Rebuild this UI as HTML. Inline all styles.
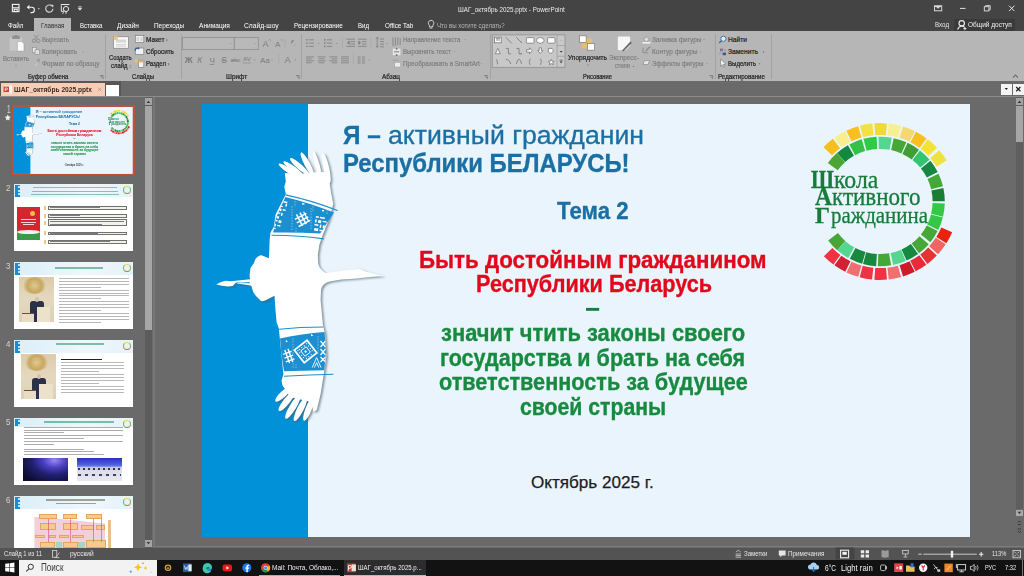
<!DOCTYPE html>
<html><head><meta charset="utf-8"><title>PowerPoint</title>
<style>
*{margin:0;padding:0;box-sizing:border-box}
html,body{width:1024px;height:576px;overflow:hidden;background:#6a6a6a;font-family:"Liberation Sans",sans-serif;position:relative}
.a{position:absolute}
.t{position:absolute;line-height:1;white-space:pre}
svg{position:absolute;overflow:visible}
</style></head><body>

<div class="a" style="left:0;top:0;width:1024px;height:31px;background:#444"></div>
<div class="a" style="left:34px;top:18px;width:37px;height:13px;background:#b6b6b6"></div>
<div class="a" style="left:954px;top:19px;width:61px;height:11.5px;background:#3a3a3a"></div>
<div class="a" style="left:0;top:31px;width:1024px;height:50px;background:#b6b6b6"></div>
<div class="a" style="left:0;top:81px;width:121px;height:15px;background:#575757"></div>
<div class="a" style="left:0;top:96px;width:1024px;height:1px;background:#8c8c8c"></div>
<div class="a" style="left:1px;top:83px;width:104px;height:13px;background:#f8cdb5"></div>
<div class="a" style="left:106px;top:85px;width:13px;height:11px;background:#fff"></div>
<div class="a" style="left:153px;top:546px;width:871px;height:1px;background:#7c7c7c"></div>
<div class="a" style="left:0;top:548px;width:1024px;height:12px;background:#535353"></div>
<div class="a" style="left:0;top:560px;width:1024px;height:16px;background:#121212"></div>
<div class="a" style="left:153px;top:97px;width:2px;height:450px;background:#777"></div>
<div class="a" style="left:105.4px;top:34px;width:1px;height:45px;background:#a2a2a2"></div>
<div class="a" style="left:180.5px;top:34px;width:1px;height:45px;background:#a2a2a2"></div>
<div class="a" style="left:301.0px;top:34px;width:1px;height:45px;background:#a2a2a2"></div>
<div class="a" style="left:489.8px;top:34px;width:1px;height:45px;background:#a2a2a2"></div>
<div class="a" style="left:714.5px;top:34px;width:1px;height:45px;background:#a2a2a2"></div>
<div class="a" style="left:770.5px;top:34px;width:1px;height:45px;background:#a2a2a2"></div>

<!-- QAT icons -->
<svg style="left:0;top:0" width="100" height="18">
 <g fill="none" stroke="#f2f2f2" stroke-width="1.1">
  <rect x="12.4" y="4.4" width="6.6" height="7.2"/>
  <line x1="12.4" y1="7.8" x2="19" y2="7.8"/>
  <rect x="14.2" y="9.3" width="3" height="2.3"/>
  <path d="M27.5 7.2 h4.2 a2.7 2.7 0 0 1 0 5.4 h-1.2"/>
 </g>
 <path d="M26.8 7.2 l2.6 -2.4 v4.8z" fill="#f2f2f2"/>
 <path d="M37.6 8.2 h2.4 l-1.2 1.3z" fill="#ddd"/>
 <path d="M51.8 6 A3.6 3.6 0 1 0 52.9 8.7" fill="none" stroke="#cfcfcf" stroke-width="1.2"/>
 <path d="M50.6 4.6 l3 0.4 -0.6 2.8z" fill="#cfcfcf"/>
 <g fill="none" stroke="#e8e8e8" stroke-width="1">
  <path d="M60.8 4.5 h8.6"/>
  <path d="M61.3 5.5 v5.8 h3"/>
  <circle cx="66" cy="9" r="2.6"/>
  <path d="M63.5 12.2 l-0.8 1.6 M66 12 v1.8"/>
 </g>
 <path d="M78.2 6.8 h3.5 M78.2 8.2 h3.5 l-1.75 2z" stroke="#e0e0e0" stroke-width="0.8" fill="#e0e0e0"/>
</svg>
<!-- window controls -->
<svg style="left:920px;top:0" width="104" height="18">
 <rect x="14.5" y="5.8" width="7.2" height="5" fill="none" stroke="#d8d8d8" stroke-width="1"/>
 <path d="M16.2 7 l1.9 1.8 1.9 -1.8z" fill="#d8d8d8"/>
 <rect x="15" y="5.8" width="6.2" height="1.2" fill="#d8d8d8"/>
 <line x1="40" y1="8.4" x2="45.5" y2="8.4" stroke="#e0e0e0" stroke-width="1"/>
 <rect x="64.3" y="6.7" width="4.6" height="4.2" fill="none" stroke="#e0e0e0" stroke-width="0.9"/>
 <path d="M65.6 6.7 v-1.1 h4.6 v4.2 h-1.2" fill="none" stroke="#e0e0e0" stroke-width="0.9"/>
 <path d="M89 5.7 l5.4 5.4 M94.4 5.7 l-5.4 5.4" stroke="#e6e6e6" stroke-width="1"/>
</svg>
<!-- bulb + person -->
<svg style="left:425px;top:18px" width="14" height="14">
 <path d="M6 2.3 a2.8 2.8 0 0 1 1.8 5 v1.6 h-3.4 v-1.6 a2.8 2.8 0 0 1 1.6 -5z" fill="none" stroke="#dcdcdc" stroke-width="0.9"/>
 <path d="M4.6 10 h2.8" stroke="#dcdcdc" stroke-width="0.9"/>
</svg>
<svg style="left:956px;top:19px" width="12" height="12">
 <circle cx="5.7" cy="4.3" r="2.7" fill="none" stroke="#f0f0f0" stroke-width="1.1"/>
 <path d="M1.6 10.6 q1 -3.2 4 -3.6 q2.2 0 3 1.2" fill="none" stroke="#f0f0f0" stroke-width="1.1"/>
 <path d="M7.3 9.6 h3.2 M8.9 8 v3.2" stroke="#f0f0f0" stroke-width="0.9"/>
</svg>
<!-- ribbon icons group 1 -->
<svg style="left:0;top:31px" width="1024" height="50">
 <!-- paste -->
 <rect x="9.7" y="6.3" width="12.4" height="13.5" fill="#c7c7c7" stroke="#bdbdbd" stroke-width="0.5"/>
 <rect x="12.2" y="4.9" width="7.6" height="3" fill="#8f8f8f"/>
 <rect x="14.6" y="4" width="2.8" height="1.4" fill="#8f8f8f"/>
 <path d="M17.4 10.4 h4.2 l2.4 2.4 v7.3 h-6.6z" fill="#fafafa" stroke="#9a9a9a" stroke-width="0.5"/>
 <path d="M15.2 34 h1.6 l-0.8 0.9z" fill="#7a7a7a"/>
 <!-- scissors -->
 <g fill="none" stroke="#8a8a8a" stroke-width="0.9">
  <circle cx="34" cy="9.8" r="1.7"/><circle cx="38.4" cy="9.8" r="1.7"/>
  <path d="M34.6 8.3 l4 -4.6 M37.8 8.3 l-4 -4.6"/>
 </g>
 <!-- copy -->
 <rect x="32.4" y="16.3" width="3.8" height="5" fill="#e6e6e6" stroke="#8a8a8a" stroke-width="0.6"/>
 <rect x="35" y="18.8" width="4.6" height="4.6" fill="#dedede" stroke="#8a8a8a" stroke-width="0.6"/>
 <path d="M82.3 20.4 h1.6 l-0.8 0.9z" fill="#7a7a7a"/>
 <!-- format painter -->
 <path d="M34.2 34.2 l2.6 -2.4 1.3 1.3 -2.6 2.4z" fill="#c4c4c4"/>
 <path d="M37 28.7 l2.4 2.1 M38.6 27.8 l1.4 1.4" stroke="#7e7e7e" stroke-width="1"/>
 <!-- dialog launchers -->
 <g fill="none" stroke="#6e6e6e" stroke-width="0.7">
  <path d="M100 44.5 h3 v3"/><path d="M100.6 45.1 l2.6 2.6"/>
  <path d="M296.2 44.5 h3 v3"/><path d="M296.8 45.1 l2.6 2.6"/>
  <path d="M484.3 44.5 h3 v3"/><path d="M484.9 45.1 l2.6 2.6"/>
  <path d="M709.6 44.5 h3 v3"/><path d="M710.2 45.1 l2.6 2.6"/>
 </g>
 <!-- new slide -->
 <rect x="113.4" y="5.7" width="15.1" height="11.6" fill="#f7f7f7" stroke="#8c8c8c" stroke-width="0.8"/>
 <rect x="116" y="8.6" width="10" height="3" fill="#d6d6d6"/>
 <path d="M116 13.6 h10 M116 15.2 h10" stroke="#c2c2c2" stroke-width="0.7"/>
 <circle cx="115.8" cy="6.9" r="2.4" fill="#e8c06a" opacity="0.85"/>
 <path d="M129.4 36.2 h1.6 l-0.8 0.9z" fill="#5a5a5a"/>
 <!-- layout -->
 <rect x="135.3" y="4.5" width="8.5" height="7" fill="#f2f2f2" stroke="#7e7e7e" stroke-width="0.7"/>
 <path d="M136.6 6 h2.6 v4.2 h-2.6z M140.3 6 h2.3 v4.2 h-2.3z" fill="#d6d6d6"/>
 <path d="M166 9.5 h1.7 l-0.85 0.95z" fill="#5a5a5a"/>
 <!-- reset -->
 <rect x="135.3" y="17" width="8.5" height="6.6" fill="#f2f2f2" stroke="#7e7e7e" stroke-width="0.7"/>
 <path d="M135 19.6 a2.6 2.6 0 0 1 3.8 -2.2" fill="none" stroke="#2c5a9e" stroke-width="1.3"/>
 <path d="M138 16 l1.8 1.4 -2 1.2z" fill="#2c5a9e"/>
 <!-- section -->
 <rect x="138.3" y="29.2" width="5.5" height="7.3" fill="#f2f2f2" stroke="#7e7e7e" stroke-width="0.7"/>
 <rect x="138.3" y="29.2" width="5.5" height="2.2" fill="#d9b070"/>
 <circle cx="136.3" cy="30" r="1.8" fill="#e8c870" opacity="0.8"/>
 <path d="M167.8 33.5 h1.7 l-0.85 0.95z" fill="#5a5a5a"/>
 <!-- font combos -->
 <rect x="182.4" y="6.4" width="51.9" height="12.2" fill="#b9b9b9" stroke="#8e8e8e" stroke-width="0.8"/>
 <rect x="234.3" y="6.4" width="24" height="12.2" fill="#b9b9b9" stroke="#8e8e8e" stroke-width="0.8"/>
 <path d="M229.7 12.4 h1.5 l-0.75 0.85z M254.3 12.4 h1.5 l-0.75 0.85z" fill="#6e6e6e"/>
</svg>
<svg style="left:0;top:0" width="1024" height="90">
<g fill="#7c7c7c"><text x="262.6" y="47" font-family="Liberation Sans" font-size="9" >A</text><text x="275" y="47" font-family="Liberation Sans" font-size="8">A</text></g>
<path d="M268.6 40.6 l1 -1.2 1 1.2 M281.2 39.4 l0.9 1.1 0.9 -1.1" stroke="#7c7c7c" stroke-width="0.6" fill="none"/>
<path d="M285 39 v9" stroke="#a8a8a8" stroke-width="0.8"/>
<path d="M290.5 42.6 l2.2 -3 1.4 1 -2.2 3z" fill="#8a8a8a"/><path d="M292.5 45.5 l3 -2.4 1.2 1.4 -2.6 2.4z" fill="#c4a0a0" opacity="0.5"/>
<g fill="#7c7c7c" font-family="Liberation Sans" font-weight="700"><text x="184.8" y="63.3" font-size="8.6">Ж</text><text x="197.2" y="63.3" font-size="8.4" font-style="italic" font-weight="400">К</text><text x="209.4" y="62.6" font-size="8" font-weight="400">Ч</text><text x="221.4" y="63" font-size="8.4" font-weight="400">S</text><text x="230.6" y="62.4" font-size="6.2" font-weight="400">abc</text><text x="243" y="60.8" font-size="6.2" font-weight="400">AV</text><text x="260" y="63" font-size="8" font-weight="400">Aa</text><text x="284.4" y="63.3" font-size="9.2" font-weight="400">A</text></g>
<path d="M209.5 64.4 h4.6 M221.2 60.4 h5" stroke="#7c7c7c" stroke-width="0.7"/>
<path d="M231 60.4 h8" stroke="#7c7c7c" stroke-width="0.6"/>
<path d="M243.4 63 h7 M243.4 63 l1 -0.8 M250.4 63 l-1 -0.8" stroke="#7c7c7c" stroke-width="0.5" fill="none"/>
<path d="M253.7 59.6 h1.6 l-0.8 0.9z" fill="#7c7c7c"/>
<path d="M271.2 59.6 h1.6 l-0.8 0.9z" fill="#7c7c7c"/>
<path d="M294.59999999999997 59.6 h1.6 l-0.8 0.9z" fill="#7c7c7c"/>
<path d="M278.7 54 v10" stroke="#a8a8a8" stroke-width="0.8"/>
<rect x="306.2" y="39.099999999999994" width="1.4" height="1.4" fill="#7c7c7c"/><path d="M308.8 39.8 h5.0" stroke="#7c7c7c" stroke-width="0.8"/><rect x="306.2" y="42.39999999999999" width="1.4" height="1.4" fill="#7c7c7c"/><path d="M308.8 43.099999999999994 h5.0" stroke="#7c7c7c" stroke-width="0.8"/><rect x="306.2" y="45.699999999999996" width="1.4" height="1.4" fill="#7c7c7c"/><path d="M308.8 46.4 h5.0" stroke="#7c7c7c" stroke-width="0.8"/>
<rect x="324.2" y="38.9" width="1.2" height="1.8" fill="#7c7c7c"/><path d="M326.8 39.8 h5.4" stroke="#7c7c7c" stroke-width="0.8"/><rect x="324.2" y="42.199999999999996" width="1.2" height="1.8" fill="#7c7c7c"/><path d="M326.8 43.099999999999994 h5.4" stroke="#7c7c7c" stroke-width="0.8"/><rect x="324.2" y="45.5" width="1.2" height="1.8" fill="#7c7c7c"/><path d="M326.8 46.4 h5.4" stroke="#7c7c7c" stroke-width="0.8"/>
<path d="M317.6 42.9 h1.8 l-0.9 1z" fill="#7c7c7c"/>
<path d="M335.70000000000005 42.9 h1.8 l-0.9 1z" fill="#7c7c7c"/>
<path d="M386.1 42.9 h1.8 l-0.9 1z" fill="#7c7c7c"/>
<path d="M368.1 59.4 h1.8 l-0.9 1z" fill="#7c7c7c"/>
<path d="M342.5 37.5 v11 M371 37.5 v11 M353.5 52.5 v12" stroke="#a8a8a8" stroke-width="0.8"/>
<path d="M346.4 39.2 h8.6 M350.4 41.6 h4.6 M350.4 44 h4.6 M346.4 46.4 h8.6" stroke="#7c7c7c" stroke-width="0.8"/>
<path d="M349.59999999999997 40.6 l-2.6 2.2 2.6 2.2z" fill="#7c7c7c"/>
<path d="M358 39.2 h8.6 M362 41.6 h4.6 M362 44 h4.6 M358 46.4 h8.6" stroke="#7c7c7c" stroke-width="0.8"/>
<path d="M358.4 40.6 l2.6 2.2 -2.6 2.2z" fill="#7c7c7c"/>
<path d="M375.8 38.8 l1.4 -1.6 1.4 1.6 M377.2 37.4 v9.8 M375.8 45.8 l1.4 1.6 1.4 -1.6 M380 39 h4 M380 41.6 h4 M380 44.2 h4 M380 46.8 h4" stroke="#7c7c7c" stroke-width="0.8" fill="none"/>
<path d="M306 56.9 h8" stroke="#7c7c7c" stroke-width="0.75"/><path d="M306 58.85 h5.6" stroke="#7c7c7c" stroke-width="0.75"/><path d="M306 60.8 h8" stroke="#7c7c7c" stroke-width="0.75"/><path d="M306 62.75 h5.6" stroke="#7c7c7c" stroke-width="0.75"/>
<path d="M317.6 56.9 h8" stroke="#7c7c7c" stroke-width="0.75"/><path d="M318.8 58.85 h5.6" stroke="#7c7c7c" stroke-width="0.75"/><path d="M317.6 60.8 h8" stroke="#7c7c7c" stroke-width="0.75"/><path d="M318.8 62.75 h5.6" stroke="#7c7c7c" stroke-width="0.75"/>
<path d="M329.4 56.9 h8" stroke="#7c7c7c" stroke-width="0.75"/><path d="M331.79999999999995 58.85 h5.6" stroke="#7c7c7c" stroke-width="0.75"/><path d="M329.4 60.8 h8" stroke="#7c7c7c" stroke-width="0.75"/><path d="M331.79999999999995 62.75 h5.6" stroke="#7c7c7c" stroke-width="0.75"/>
<path d="M341 56.9 h8" stroke="#7c7c7c" stroke-width="0.75"/><path d="M341 58.85 h8" stroke="#7c7c7c" stroke-width="0.75"/><path d="M341 60.8 h8" stroke="#7c7c7c" stroke-width="0.75"/><path d="M341 62.75 h8" stroke="#7c7c7c" stroke-width="0.75"/>
<path d="M357.6 57 h3 M357.6 59 h3 M357.6 61 h3 M357.6 63 h3 M362 57 h3 M362 59 h3 M362 61 h3 M362 63 h3" stroke="#7c7c7c" stroke-width="0.75"/>
<path d="M393 37.4 v7.6 M395.4 37.4 v7.6 M397.8 37.4 v7.6 M400.2 38 v7" stroke="#7c7c7c" stroke-width="0.8"/><path d="M392.4 45 l0.6 1 0.6 -1 M394.8 45 l0.6 1 0.6 -1" stroke="#7c7c7c" stroke-width="0.5" fill="none"/>
<rect x="392.8" y="48.6" width="7.6" height="6.6" fill="#e6e6e6"/><path d="M394 51.8 h5.2" stroke="#7c7c7c" stroke-width="1"/><circle cx="396.6" cy="48.8" r="1" fill="#7c7c7c"/><circle cx="396.6" cy="55" r="1" fill="#7c7c7c"/>
<path d="M392.6 60.2 h5 l1.4 1.4" stroke="#999" stroke-width="0.8" fill="none"/><rect x="394.6" y="62.4" width="6" height="4.6" fill="#ececec" stroke="#999" stroke-width="0.5"/>
<rect x="492.3" y="34.9" width="72.7" height="32.4" fill="#c8c8c8" stroke="#8e8e8e" stroke-width="0.8"/>
<path d="M557.1 34.9 v32.4 M557.1 45.6 h7.9 M557.1 56.2 h7.9" stroke="#9a9a9a" stroke-width="0.7"/>
<path d="M559.6 51 h3 l-1.5 1.6z M559.6 61.6 h3 l-1.5 1.6z" fill="#333"/><path d="M559.6 60.2 h3" stroke="#333" stroke-width="0.6"/>
<path d="M559.8 41.2 l1.3 -1.4 1.3 1.4" stroke="#aaa" stroke-width="0.6" fill="none"/>
<g fill="#fafafa" stroke="#6a6a6a" stroke-width="0.7"><rect x="494.6" y="37.2" width="6.6" height="5.6"/><rect x="526.4" y="37.6" width="7.6" height="5.6" rx="0.6"/><ellipse cx="540.3" cy="40.4" rx="3.8" ry="2.9"/><rect x="547.6" y="37.6" width="7.4" height="5.6" rx="1"/><path d="M495.4 53.8 l2.4 -5.4 2.4 5.4z"/><path d="M526.6 49.6 h3 v-1.8 l2.6 3 -2.6 3 v-1.8 h-3z"/><path d="M539.2 47.8 h2.2 v2.8 h1.4 l-2.5 2.8 -2.5 -2.8 h1.4z"/><path d="M548.4 48.4 h3.6 a2.6 2.6 0 1 1 -3.6 3.6z"/><path d="M551.3 59.4 l0.9 1.8 2 0.2 -1.5 1.3 0.5 2 -1.9 -1.1 -1.9 1.1 0.5 -2 -1.5 -1.3 2 -0.2z"/></g>
<g fill="none" stroke="#6a6a6a" stroke-width="0.7"><path d="M496 38.6 h4 M496 40 h4"/><path d="M505.8 37.4 l6 6"/><path d="M516.4 37.4 l5.4 5.4"/><path d="M505.8 48.4 h2.6 v5.4 h2.6"/><path d="M516.4 48.4 h2.6 v5.4 h2.8"/><path d="M496 59.4 q2 1 1 2.4 q1 1.2 0.4 2.6"/><path d="M505.8 59.4 q3.6 0 5 4.6"/><path d="M516.4 64 q1 -4.8 2.6 -4.8 q1.6 0 2.6 4.8"/><path d="M530.6 59 q-1 0 -1 1.2 v1 l-0.6 0.6 0.6 0.6 v1 q0 1.2 1 1.2"/><path d="M540 59 q1 0 1 1.2 v1 l0.6 0.6 -0.6 0.6 v1 q0 1.2 -1 1.2"/></g>
<path d="M521.8 42.8 l-1.2 0 1.2 -1.2z M522 53.8 l-1.2 -0.8 v1.6z" fill="#6a6a6a"/>
<rect x="581.6" y="38.4" width="10.4" height="10.2" fill="#ecc060" opacity="0.85"/>
<rect x="579.6" y="35.8" width="6.6" height="6.6" fill="#fdfdfd" stroke="#7a7a7a" stroke-width="0.7"/>
<rect x="587.6" y="43.6" width="7" height="6.6" fill="#fdfdfd" stroke="#7a7a7a" stroke-width="0.7"/>
<path d="M587 64.8 h1.7 l-0.85 1z M632.6 66 h1.7 l-0.85 1z" fill="#5a5a5a"/>
<path d="M617.8 37.6 q0 -1 1 -1 h10.4 q1 0 1 1 v8 l-4.6 4.6 h-6.8 q-1 0 -1 -1z" fill="#f6f6f6"/><path d="M630.6 41.2 l-8.6 9.4 l1.4 0.8 8.4 -8.4z" fill="#6c6c6c"/>
<path d="M643.6 39.4 l2.8 -2.8 2.8 2.8 -2.8 2.6z" fill="#dedede" stroke="#7c7c7c" stroke-width="0.6"/><rect x="642.4" y="42" width="8" height="1.6" fill="#f0f0f0"/>
<path d="M643 47.8 v5 h5 M648.4 47.6 l2 -0.6 -4 4 -0.8 0.4 0.4 -0.8z" stroke="#7c7c7c" stroke-width="0.7" fill="none"/>
<path d="M643 64.6 l1.6 -4 h5 l-1.6 4z" fill="#e8e8e8" stroke="#7c7c7c" stroke-width="0.6"/>
<path d="M703.2 39 h1.6 l-0.8 0.9z" fill="#7c7c7c"/>
<path d="M699.7 51.6 h1.6 l-0.8 0.9z" fill="#7c7c7c"/>
<path d="M706.2 63.4 h1.6 l-0.8 0.9z" fill="#7c7c7c"/>
<path d="M464.2 39.4 h1.6 l-0.8 0.9z" fill="#7c7c7c"/>
<path d="M453.59999999999997 51.4 h1.6 l-0.8 0.9z" fill="#7c7c7c"/>
<path d="M480.7 63.4 h1.6 l-0.8 0.9z" fill="#7c7c7c"/>
<circle cx="723.4" cy="38.8" r="2.6" fill="#dff0f8" stroke="#3d6a98" stroke-width="0.9"/><path d="M721.4 40.8 l-2.2 2.2" stroke="#3d6a98" stroke-width="1.3"/>
<path d="M720 48.6 h3 v2.6 h-3z" fill="#8c6aa8"/><path d="M722.6 52.6 h3.4 v2.6 h-3.4z" fill="#3a5a8a"/><path d="M719.4 53.8 l1.6 -1 M724 49.8 q1.6 0 1.6 1.4" stroke="#6a6a8a" stroke-width="0.6" fill="none"/>
<path d="M720.6 59 v7.4 l1.8 -1.6 1.4 2.4 1 -0.6 -1.4 -2.2 2.4 -0.2z" fill="#f8f8f8" stroke="#6a6a6a" stroke-width="0.6"/>
<path d="M762.65 51.8 h1.7 l-0.85 0.95z" fill="#4a4a4a"/>
<path d="M758.75 63.6 h1.7 l-0.85 0.95z" fill="#4a4a4a"/>
<path d="M165.95000000000002 39.4 h1.7 l-0.85 0.95z" fill="#4a4a4a"/>
<path d="M167.65 63.4 h1.7 l-0.85 0.95z" fill="#4a4a4a"/>
<path d="M129.45000000000002 65.4 h1.7 l-0.85 0.95z" fill="#4a4a4a"/>
</svg>
<div class="t" style="left:458.20px;top:6.00px;font-size:7.25px;color:#ececec;transform:scaleX(0.8657);transform-origin:left;">ШАГ_октябрь 2025.pptx - PowerPoint</div>
<div class="t" style="left:8.00px;top:22.00px;font-size:7.39px;color:#ffffff;transform:scaleX(0.8474);transform-origin:left;">Файл</div>
<div class="t" style="left:79.50px;top:22.00px;font-size:7.39px;color:#ffffff;transform:scaleX(0.8154);transform-origin:left;">Вставка</div>
<div class="t" style="left:117.00px;top:22.00px;font-size:7.39px;color:#ffffff;transform:scaleX(0.8815);transform-origin:left;">Дизайн</div>
<div class="t" style="left:153.75px;top:22.00px;font-size:7.39px;color:#ffffff;transform:scaleX(0.8725);transform-origin:left;">Переходы</div>
<div class="t" style="left:199.00px;top:22.00px;font-size:7.39px;color:#ffffff;transform:scaleX(0.8934);transform-origin:left;">Анимация</div>
<div class="t" style="left:244.00px;top:22.00px;font-size:7.39px;color:#ffffff;transform:scaleX(0.9069);transform-origin:left;">Слайд-шоу</div>
<div class="t" style="left:294.00px;top:22.00px;font-size:7.39px;color:#ffffff;transform:scaleX(0.8550);transform-origin:left;">Рецензирование</div>
<div class="t" style="left:358.40px;top:22.00px;font-size:7.39px;color:#ffffff;transform:scaleX(0.8226);transform-origin:left;">Вид</div>
<div class="t" style="left:384.75px;top:22.00px;font-size:7.39px;color:#ffffff;transform:scaleX(0.8558);transform-origin:left;">Office Tab</div>
<div class="t" style="left:40.50px;top:22.00px;font-size:7.39px;color:#303030;transform:scaleX(0.8353);transform-origin:left;">Главная</div>
<div class="t" style="left:437.00px;top:22.00px;font-size:7.39px;color:#b4b4b4;transform:scaleX(0.8292);transform-origin:left;">Что вы хотите сделать?</div>
<div class="t" style="left:935.00px;top:21.00px;font-size:7.25px;color:#e6e6e6;transform:scaleX(0.8540);transform-origin:left;">Вход</div>
<div class="t" style="left:967.70px;top:21.00px;font-size:7.25px;color:#f0f0f0;transform:scaleX(0.8976);transform-origin:left;">Общий доступ</div>
<div class="t" style="left:3.00px;top:56.00px;font-size:6.67px;color:#808080;transform:scaleX(0.9200);transform-origin:left;-webkit-text-stroke:0.22px #808080;">Вставить</div>
<div class="t" style="left:42.10px;top:37.00px;font-size:6.67px;color:#808080;transform:scaleX(0.9072);transform-origin:left;-webkit-text-stroke:0.22px #808080;">Вырезать</div>
<div class="t" style="left:42.00px;top:49.00px;font-size:6.67px;color:#808080;transform:scaleX(0.9723);transform-origin:left;-webkit-text-stroke:0.22px #808080;">Копировать</div>
<div class="t" style="left:42.00px;top:61.00px;font-size:6.67px;color:#808080;transform:scaleX(0.9619);transform-origin:left;-webkit-text-stroke:0.22px #808080;">Формат по образцу</div>
<div class="t" style="left:27.80px;top:74.00px;font-size:6.67px;color:#262626;transform:scaleX(0.8940);transform-origin:left;-webkit-text-stroke:0.22px #262626;">Буфер обмена</div>
<div class="t" style="left:109.40px;top:55.00px;font-size:6.67px;color:#262626;transform:scaleX(0.8920);transform-origin:left;-webkit-text-stroke:0.22px #262626;">Создать</div>
<div class="t" style="left:111.00px;top:63.00px;font-size:6.67px;color:#262626;transform:scaleX(0.8897);transform-origin:left;-webkit-text-stroke:0.22px #262626;">слайд</div>
<div class="t" style="left:145.60px;top:37.00px;font-size:6.67px;color:#262626;transform:scaleX(0.9805);transform-origin:left;-webkit-text-stroke:0.22px #262626;">Макет</div>
<div class="t" style="left:145.60px;top:49.00px;font-size:6.67px;color:#262626;transform:scaleX(0.9382);transform-origin:left;-webkit-text-stroke:0.22px #262626;">Сбросить</div>
<div class="t" style="left:145.60px;top:61.00px;font-size:6.67px;color:#262626;transform:scaleX(0.9076);transform-origin:left;-webkit-text-stroke:0.22px #262626;">Раздел</div>
<div class="t" style="left:132.00px;top:74.00px;font-size:6.67px;color:#262626;transform:scaleX(0.8865);transform-origin:left;-webkit-text-stroke:0.22px #262626;">Слайды</div>
<div class="t" style="left:225.80px;top:74.00px;font-size:6.67px;color:#262626;transform:scaleX(0.9665);transform-origin:left;-webkit-text-stroke:0.22px #262626;">Шрифт</div>
<div class="t" style="left:382.00px;top:74.00px;font-size:6.67px;color:#262626;transform:scaleX(0.9625);transform-origin:left;-webkit-text-stroke:0.22px #262626;">Абзац</div>
<div class="t" style="left:403.00px;top:37.00px;font-size:6.67px;color:#808080;transform:scaleX(0.9099);transform-origin:left;-webkit-text-stroke:0.22px #808080;">Направление текста</div>
<div class="t" style="left:403.00px;top:49.00px;font-size:6.67px;color:#808080;transform:scaleX(0.9243);transform-origin:left;-webkit-text-stroke:0.22px #808080;">Выровнять текст</div>
<div class="t" style="left:403.00px;top:61.00px;font-size:6.67px;color:#808080;transform:scaleX(0.9522);transform-origin:left;-webkit-text-stroke:0.22px #808080;">Преобразовать в SmartArt</div>
<div class="t" style="left:567.50px;top:55.00px;font-size:6.67px;color:#262626;transform:scaleX(0.9831);transform-origin:left;-webkit-text-stroke:0.22px #262626;">Упорядочить</div>
<div class="t" style="left:609.00px;top:55.00px;font-size:6.67px;color:#808080;transform:scaleX(0.9668);transform-origin:left;-webkit-text-stroke:0.22px #808080;">Экспресс-</div>
<div class="t" style="left:614.50px;top:63.00px;font-size:6.67px;color:#808080;transform:scaleX(0.8463);transform-origin:left;-webkit-text-stroke:0.22px #808080;">стили</div>
<div class="t" style="left:652.00px;top:37.00px;font-size:6.67px;color:#808080;transform:scaleX(0.9723);transform-origin:left;-webkit-text-stroke:0.22px #808080;">Заливка фигуры</div>
<div class="t" style="left:652.00px;top:49.00px;font-size:6.67px;color:#808080;transform:scaleX(0.9760);transform-origin:left;-webkit-text-stroke:0.22px #808080;">Контур фигуры</div>
<div class="t" style="left:652.00px;top:61.00px;font-size:6.67px;color:#808080;transform:scaleX(0.9270);transform-origin:left;-webkit-text-stroke:0.22px #808080;">Эффекты фигуры</div>
<div class="t" style="left:583.00px;top:74.00px;font-size:6.67px;color:#262626;transform:scaleX(0.8637);transform-origin:left;-webkit-text-stroke:0.22px #262626;">Рисование</div>
<div class="t" style="left:728.00px;top:37.00px;font-size:6.67px;color:#262626;-webkit-text-stroke:0.22px #262626;">Найти</div>
<div class="t" style="left:728.00px;top:49.00px;font-size:6.67px;color:#262626;-webkit-text-stroke:0.22px #262626;">Заменить</div>
<div class="t" style="left:728.00px;top:61.00px;font-size:6.67px;color:#262626;transform:scaleX(0.9104);transform-origin:left;-webkit-text-stroke:0.22px #262626;">Выделить</div>
<div class="t" style="left:718.00px;top:74.00px;font-size:6.67px;color:#262626;transform:scaleX(0.9255);transform-origin:left;-webkit-text-stroke:0.22px #262626;">Редактирование</div>
<div class="t" style="left:13.70px;top:86.00px;font-size:7.97px;color:#3c2820;font-weight:700;transform:scaleX(0.8315);transform-origin:left;">ШАГ_октябрь 2025.pptx</div>
<div class="a" style="left:202px;top:104px;width:768px;height:433px;background:#e9f4fc;overflow:hidden">
<div class="a" style="left:0;top:0;width:106px;height:433px;background:#0091d9"></div>
<svg style="left:-202px;top:-104px" width="1024" height="576">
<g transform="translate(1.7,1.2)" fill="#4a6070" opacity="0.65" filter="url(#sh)"><path d="M216.2 284.4 Q220 282 225.5 280.7 L230.8 281.2 L250 279.2 L249.5 276 L250.5 267.7 L253.7 263.5 Q255 258.5 257.6 256.8 Q259.5 255 261.5 255.3 L268.8 258.3 L269.3 250 L269.6 240 L270.5 232.5 L273.9 226.7 L275.6 214.5 L285.2 195.4 L285.8 194 L284.3 186.7 L285.8 181.5 L284.8 173 L298 174 L318 172 L328 172 L331.2 193.6 L333.2 204 L329.6 218 L322.6 235.3 L319.4 244.5 L317.8 255 L318.2 263.6 Q319 267.5 321 269 Q323 271.5 325.6 273 L345.2 270.2 L358.4 269 Q360 268.8 361.6 269.5 L366.25 271.8 L384.2 275.7 L363.1 277.65 L356.9 278.4 L341.25 279.6 L329.5 281.6 Q326 282.5 324 284.3 Q321.5 286.5 321 290.2 L320.6 300 L322.9 324.8 L325.1 333.9 L326.3 356.4 L323.5 375.7 L320.6 393.9 L316.8 410.1 L313.5 412 L311 402 L290 397 L282.4 385.3 L281.5 380.5 L283.4 374.5 L278.8 328.2 L276.6 322.6 L275.5 310 L274.5 295.8 L266.2 300 Q263.5 301.5 261 301 L255.75 295.8 L253.1 291.7 L251.6 286.5 L250.5 285.4 L236 283.2 L250 281.6 L249.8 283.6 L236 282.6 L232.8 286 L227.6 286.5 Q222 286 216.2 284.4 Z"/><ellipse cx="289.80" cy="171.15" rx="13.29" ry="2.60" transform="rotate(-146.1 289.80 171.15)"/><ellipse cx="293.65" cy="169.10" rx="12.62" ry="2.60" transform="rotate(-143.6 293.65 169.10)"/><ellipse cx="299.50" cy="166.50" rx="12.34" ry="2.70" transform="rotate(-138.6 299.50 166.50)"/><ellipse cx="307.25" cy="164.15" rx="13.28" ry="2.80" transform="rotate(-117.9 307.25 164.15)"/><ellipse cx="317.05" cy="164.65" rx="13.82" ry="2.50" transform="rotate(-105.6 317.05 164.65)"/><ellipse cx="326.40" cy="168.20" rx="15.14" ry="2.80" transform="rotate(-102.7 326.40 168.20)"/><ellipse cx="283.60" cy="393.80" rx="11.05" ry="3.10" transform="rotate(137.4 283.60 393.80)"/><ellipse cx="286.80" cy="401.05" rx="12.56" ry="3.20" transform="rotate(128.5 286.80 401.05)"/><ellipse cx="292.85" cy="406.90" rx="13.77" ry="3.30" transform="rotate(121.4 292.85 406.90)"/><ellipse cx="300.40" cy="409.05" rx="13.39" ry="3.20" transform="rotate(116.9 300.40 409.05)"/><ellipse cx="308.45" cy="409.35" rx="12.11" ry="3.10" transform="rotate(111.4 308.45 409.35)"/></g>
<defs>
 <filter id="sh" x="-20%" y="-20%" width="140%" height="140%"><feGaussianBlur stdDeviation="1.2"/></filter>
 <clipPath id="c1"><path d="M285.4 197 Q310 203 334 212.6 L327 223 L320.2 233.5 Q296 232 273.2 232.6 L276 218 Z"/></clipPath>
 <clipPath id="c2"><path d="M280 338.6 Q302 333.5 324.6 332 L326 352 L324.3 370.3 Q302 370.6 284 371.3 L281.5 355 Z"/></clipPath>
</defs>
<g id="bird" fill="#fff"><path d="M216.2 284.4 Q220 282 225.5 280.7 L230.8 281.2 L250 279.2 L249.5 276 L250.5 267.7 L253.7 263.5 Q255 258.5 257.6 256.8 Q259.5 255 261.5 255.3 L268.8 258.3 L269.3 250 L269.6 240 L270.5 232.5 L273.9 226.7 L275.6 214.5 L285.2 195.4 L285.8 194 L284.3 186.7 L285.8 181.5 L284.8 173 L298 174 L318 172 L328 172 L331.2 193.6 L333.2 204 L329.6 218 L322.6 235.3 L319.4 244.5 L317.8 255 L318.2 263.6 Q319 267.5 321 269 Q323 271.5 325.6 273 L345.2 270.2 L358.4 269 Q360 268.8 361.6 269.5 L366.25 271.8 L384.2 275.7 L363.1 277.65 L356.9 278.4 L341.25 279.6 L329.5 281.6 Q326 282.5 324 284.3 Q321.5 286.5 321 290.2 L320.6 300 L322.9 324.8 L325.1 333.9 L326.3 356.4 L323.5 375.7 L320.6 393.9 L316.8 410.1 L313.5 412 L311 402 L290 397 L282.4 385.3 L281.5 380.5 L283.4 374.5 L278.8 328.2 L276.6 322.6 L275.5 310 L274.5 295.8 L266.2 300 Q263.5 301.5 261 301 L255.75 295.8 L253.1 291.7 L251.6 286.5 L250.5 285.4 L236 283.2 L250 281.6 L249.8 283.6 L236 282.6 L232.8 286 L227.6 286.5 Q222 286 216.2 284.4 Z"/><ellipse cx="289.80" cy="171.15" rx="13.29" ry="2.60" transform="rotate(-146.1 289.80 171.15)"/><ellipse cx="293.65" cy="169.10" rx="12.62" ry="2.60" transform="rotate(-143.6 293.65 169.10)"/><ellipse cx="299.50" cy="166.50" rx="12.34" ry="2.70" transform="rotate(-138.6 299.50 166.50)"/><ellipse cx="307.25" cy="164.15" rx="13.28" ry="2.80" transform="rotate(-117.9 307.25 164.15)"/><ellipse cx="317.05" cy="164.65" rx="13.82" ry="2.50" transform="rotate(-105.6 317.05 164.65)"/><ellipse cx="326.40" cy="168.20" rx="15.14" ry="2.80" transform="rotate(-102.7 326.40 168.20)"/><ellipse cx="283.60" cy="393.80" rx="11.05" ry="3.10" transform="rotate(137.4 283.60 393.80)"/><ellipse cx="286.80" cy="401.05" rx="12.56" ry="3.20" transform="rotate(128.5 286.80 401.05)"/><ellipse cx="292.85" cy="406.90" rx="13.77" ry="3.30" transform="rotate(121.4 292.85 406.90)"/><ellipse cx="300.40" cy="409.05" rx="13.39" ry="3.20" transform="rotate(116.9 300.40 409.05)"/><ellipse cx="308.45" cy="409.35" rx="12.11" ry="3.10" transform="rotate(111.4 308.45 409.35)"/></g>
<path id="leggap" d="M236.5 282.9 L249.6 281.9 L249.6 283.3 Z" fill="#0091d9"/>
<g fill="#1b8fd0">
 <path d="M285.4 197 Q310 203 334 212.6 L327 223 L320.2 233.5 Q296 232 273.2 232.6 L276 218 Z"/>
 <path d="M285.4 194.9 Q312 200.5 337.6 210.6" fill="none" stroke="#1b8fd0" stroke-width="1.1"/>
 <path d="M271.6 235.3 Q300 235.5 323.6 238.9" fill="none" stroke="#1b8fd0" stroke-width="1.1"/>
 <path d="M280 338.6 Q302 333.5 324.6 332 L326 352 L324.3 370.3 Q302 370.6 284 371.3 L281.5 355 Z"/>
 <path d="M279 329.2 Q300 327 323.4 327" fill="none" stroke="#1b8fd0" stroke-width="1.1"/>
 <path d="M284 376.3 Q310 374.6 333.4 374.3" fill="none" stroke="#1b8fd0" stroke-width="1.1"/>
</g>
<g fill="#fff" clip-path="url(#c1)">
 <g transform="rotate(12 282 215)">
  <rect x="277" y="201" width="2.2" height="2.6"/><rect x="280.6" y="201" width="4" height="1.4"/><rect x="283.4" y="203" width="1.4" height="3"/>
  <rect x="277" y="206" width="4" height="1.4"/><rect x="278" y="209" width="2.4" height="2.4"/><rect x="281.6" y="209" width="3" height="1.4"/>
  <rect x="276" y="213" width="4" height="1.4"/><rect x="281" y="213" width="1.4" height="3"/><rect x="277" y="217" width="2.6" height="2.4"/>
  <rect x="275" y="221" width="4" height="1.4"/><rect x="280" y="220.6" width="2.8" height="2.6"/><rect x="275.6" y="225" width="2.6" height="2.6"/>
  <rect x="279.5" y="225.4" width="3.2" height="1.4"/><rect x="274.6" y="229" width="4" height="1.4"/>
 </g>
 <g transform="rotate(-28 302 220)">
  <rect x="296" y="215.4" width="13" height="1.5"/><rect x="296" y="219.4" width="13" height="1.5"/><rect x="296" y="223.4" width="13" height="1.5"/>
  <rect x="299" y="212.5" width="1.5" height="13"/><rect x="303" y="212.5" width="1.5" height="13"/><rect x="306.6" y="213.5" width="1.3" height="11"/>
 </g>
 <g transform="rotate(10 321 225)">
  <rect x="314.5" y="217" width="3" height="1.5"/><rect x="318.6" y="217" width="5" height="1.5"/><rect x="314.5" y="220.4" width="1.5" height="3"/>
  <rect x="317.6" y="220.6" width="3" height="2.6"/><rect x="322" y="220.4" width="4" height="1.5"/><rect x="314.5" y="225" width="4" height="1.5"/>
  <rect x="320" y="224.6" width="1.5" height="3.4"/><rect x="323" y="225" width="3" height="2.6"/><rect x="315" y="229" width="4" height="2.6"/><rect x="320.4" y="229.6" width="5" height="1.5"/>
 </g>
 <path d="M292 206 v24 M295 201 v6 M296 232 v-4 M311 208 v22 M313 206 v6 M327 214 v-4" stroke="#fff" stroke-width="0.5" stroke-dasharray="1.6 1.2" opacity="0.85"/>
 <rect x="302" y="203.2" width="2.4" height="1.4"/><rect x="322" y="210" width="2" height="1.4"/>
</g>
<g fill="#fff" clip-path="url(#c2)">
 <g transform="rotate(-38 305.6 351.5)">
  <rect x="297.6" y="343.5" width="16" height="16" fill="none" stroke="#fff" stroke-width="1.7"/>
  <rect x="302.2" y="348.1" width="6.8" height="6.8" fill="none" stroke="#fff" stroke-width="0.9"/>
  <rect x="304.6" y="350.5" width="2" height="2"/>
  <path d="M299.6 346 h1.2 M299.6 349 h1.2 M299.6 352 h1.2 M299.6 355 h1.2 M310.6 346 h1.2 M310.6 349 h1.2 M310.6 352 h1.2 M310.6 355 h1.2 M302 345.6 v1.2 M305 345.6 v1.2 M308 345.6 v1.2 M302 356.8 v1.2 M305 356.8 v1.2 M308 356.8 v1.2" stroke="#fff" stroke-width="1"/>
 </g>
 <g transform="rotate(-20 288.5 356)">
  <rect x="284" y="352" width="9" height="1.4"/><rect x="284" y="356" width="9" height="1.4"/><rect x="284" y="360" width="9" height="1.4"/>
  <rect x="286.4" y="349" width="1.4" height="14"/><rect x="289.8" y="349" width="1.4" height="14"/>
 </g>
 <path d="M320.5 341 l5 6 M325.5 341 l-5 6 M320.5 349 l5 6 M325.5 349 l-5 6 M320.5 357 l5 5 M325.5 357 l-5 5" stroke="#fff" stroke-width="1.2"/>
 <path d="M312.2 367.6 l4.4 -10 4.4 10 M314.4 367.6 l2.2 -5 2.2 5" stroke="#fff" stroke-width="0.9" fill="none"/>
 <path d="M286 340 l2 1.6 -2.4 0.6z M311 334 l2.4 1.4 -2.4 0.8z"/>
 <path d="M293 338 v30 M296 368 v-4 M318 336 v18" stroke="#fff" stroke-width="0.5" stroke-dasharray="1.6 1.2" opacity="0.8"/>
</g>

<path d="M827.91 162.96A64.8 64.8 0 0 1 836.89 153.12L845.01 162.23A52.6 52.6 0 0 0 837.72 170.21Z" fill="#4ca535"/>
<path d="M837.06 152.97A64.8 64.8 0 0 1 847.89 145.21L853.94 155.81A52.6 52.6 0 0 0 845.15 162.10Z" fill="#12893f"/>
<path d="M849.38 144.39A64.8 64.8 0 0 1 861.70 139.34L865.15 151.04A52.6 52.6 0 0 0 855.14 155.14Z" fill="#34c246"/>
<path d="M863.45 138.85A64.8 64.8 0 0 1 876.61 136.79L877.25 148.97A52.6 52.6 0 0 0 866.56 150.65Z" fill="#2fcb45"/>
<path d="M878.53 136.72A64.8 64.8 0 0 1 891.81 137.79L889.59 149.78A52.6 52.6 0 0 0 878.81 148.91Z" fill="#54d68e"/>
<path d="M893.69 138.16A64.8 64.8 0 0 1 906.36 142.30L901.39 153.45A52.6 52.6 0 0 0 891.12 150.09Z" fill="#45a836"/>
<path d="M907.59 142.87A64.8 64.8 0 0 1 919.00 149.75L911.66 159.49A52.6 52.6 0 0 0 902.40 153.91Z" fill="#3f9f33"/>
<path d="M919.98 150.51A64.8 64.8 0 0 1 929.57 159.76L920.23 167.62A52.6 52.6 0 0 0 912.46 160.11Z" fill="#33c46f"/>
<path d="M930.43 160.81A64.8 64.8 0 0 1 937.69 171.98L926.83 177.54A52.6 52.6 0 0 0 920.94 168.47Z" fill="#17883f"/>
<path d="M938.54 173.71A64.8 64.8 0 0 1 942.98 186.26L931.13 189.13A52.6 52.6 0 0 0 927.52 178.94Z" fill="#45a836"/>
<path d="M943.36 187.92A64.8 64.8 0 0 1 944.80 201.16L932.60 201.22A52.6 52.6 0 0 0 931.43 190.47Z" fill="#1a7d36"/>
<path d="M944.77 203.42A64.8 64.8 0 0 1 943.01 216.63L931.15 213.78A52.6 52.6 0 0 0 932.58 203.06Z" fill="#33c846"/>
<path d="M942.82 217.40A64.8 64.8 0 0 1 938.24 229.91L927.28 224.56A52.6 52.6 0 0 0 930.99 214.40Z" fill="#33c846"/>
<path d="M937.63 231.12A64.8 64.8 0 0 1 930.36 242.28L920.88 234.60A52.6 52.6 0 0 0 926.78 225.54Z" fill="#45a836"/>
<path d="M928.76 244.18A64.8 64.8 0 0 1 919.00 253.25L911.66 243.51A52.6 52.6 0 0 0 919.58 236.15Z" fill="#45a836"/>
<path d="M918.09 253.92A64.8 64.8 0 0 1 906.56 260.61L901.56 249.48A52.6 52.6 0 0 0 910.92 244.05Z" fill="#17883f"/>
<path d="M905.84 260.93A64.8 64.8 0 0 1 893.14 264.95L890.67 253.01A52.6 52.6 0 0 0 900.97 249.74Z" fill="#54d68e"/>
<path d="M891.14 265.34A64.8 64.8 0 0 1 877.85 266.26L878.26 254.07A52.6 52.6 0 0 0 889.04 253.32Z" fill="#45a836"/>
<path d="M876.16 266.19A64.8 64.8 0 0 1 863.01 264.03L866.21 252.26A52.6 52.6 0 0 0 876.88 254.01Z" fill="#17883f"/>
<path d="M862.14 263.79A64.8 64.8 0 0 1 849.78 258.82L855.47 248.03A52.6 52.6 0 0 0 865.50 252.06Z" fill="#17883f"/>
<path d="M848.29 258.01A64.8 64.8 0 0 1 837.40 250.33L845.42 241.14A52.6 52.6 0 0 0 854.26 247.37Z" fill="#54d68e"/>
<path d="M837.23 250.18A64.8 64.8 0 0 1 828.18 240.41L837.94 233.08A52.6 52.6 0 0 0 845.28 241.02Z" fill="#45a836"/>
<path d="M823.51 147.14A78.4 78.4 0 0 1 832.93 138.80L840.01 148.24A66.6 66.6 0 0 0 832.01 155.32Z" fill="#f7bf1e"/>
<path d="M834.36 137.75A78.4 78.4 0 0 1 845.14 131.28L850.39 141.85A66.6 66.6 0 0 0 841.23 147.35Z" fill="#f8ef8c"/>
<path d="M846.37 130.68A78.4 78.4 0 0 1 858.13 126.21L861.42 137.54A66.6 66.6 0 0 0 851.43 141.34Z" fill="#f8bf1e"/>
<path d="M859.97 125.70A78.4 78.4 0 0 1 872.35 123.47L873.50 135.22A66.6 66.6 0 0 0 862.99 137.11Z" fill="#f4e043"/>
<path d="M874.39 123.30A78.4 78.4 0 0 1 886.97 123.41L885.92 135.16A66.6 66.6 0 0 0 875.24 135.07Z" fill="#f0dc2e"/>
<path d="M888.88 123.60A78.4 78.4 0 0 1 901.22 126.02L898.02 137.38A66.6 66.6 0 0 0 887.54 135.33Z" fill="#f8f08e"/>
<path d="M903.05 126.57A78.4 78.4 0 0 1 914.74 131.22L909.51 141.79A66.6 66.6 0 0 0 899.58 137.84Z" fill="#f6d872"/>
<path d="M915.84 131.77A78.4 78.4 0 0 1 926.52 138.40L919.52 147.89A66.6 66.6 0 0 0 910.44 142.26Z" fill="#f8bf1e"/>
<path d="M927.73 139.30A78.4 78.4 0 0 1 937.06 147.73L928.47 155.82A66.6 66.6 0 0 0 920.54 148.66Z" fill="#f6e236"/>
<path d="M939.26 150.17A78.4 78.4 0 0 1 946.70 160.30L936.66 166.50A66.6 66.6 0 0 0 930.34 157.89Z" fill="#eee140"/>
<path d="M952.17 232.13A78.4 78.4 0 0 1 946.34 243.28L936.36 236.99A66.6 66.6 0 0 0 941.31 227.52Z" fill="#e8230f"/>
<path d="M945.68 244.31A78.4 78.4 0 0 1 937.99 254.26L929.26 246.32A66.6 66.6 0 0 0 935.79 237.87Z" fill="#f06464"/>
<path d="M936.78 255.57A78.4 78.4 0 0 1 927.40 263.95L920.27 254.55A66.6 66.6 0 0 0 928.23 247.43Z" fill="#e83232"/>
<path d="M926.30 264.77A78.4 78.4 0 0 1 915.59 271.35L910.24 260.84A66.6 66.6 0 0 0 919.33 255.24Z" fill="#e82a3a"/>
<path d="M914.74 271.78A78.4 78.4 0 0 1 903.05 276.43L899.58 265.16A66.6 66.6 0 0 0 909.51 261.21Z" fill="#cf1a2a"/>
<path d="M901.08 277.01A78.4 78.4 0 0 1 888.74 279.41L887.42 267.68A66.6 66.6 0 0 0 897.91 265.65Z" fill="#f07070"/>
<path d="M886.97 279.59A78.4 78.4 0 0 1 874.39 279.70L875.24 267.93A66.6 66.6 0 0 0 885.92 267.84Z" fill="#f03242"/>
<path d="M872.08 279.50A78.4 78.4 0 0 1 859.71 277.23L862.76 265.83A66.6 66.6 0 0 0 873.27 267.76Z" fill="#f03242"/>
<path d="M858.26 276.83A78.4 78.4 0 0 1 846.50 272.38L851.54 261.71A66.6 66.6 0 0 0 861.53 265.49Z" fill="#f07070"/>
<path d="M845.26 271.78A78.4 78.4 0 0 1 834.47 265.33L841.33 255.72A66.6 66.6 0 0 0 850.49 261.21Z" fill="#d02232"/>
<path d="M833.37 264.52A78.4 78.4 0 0 1 823.89 256.26L832.33 248.01A66.6 66.6 0 0 0 840.38 255.04Z" fill="#f03242"/>
<rect x="586" y="307.9" width="13.2" height="2.9" fill="#1d7a44"/>
</svg>
<div class="t" style="left:141.20px;top:19.00px;font-size:25.30px;color:#1a6fa4;font-weight:700;transform:scaleX(0.9619);transform-origin:left;-webkit-text-stroke:0.35px #1a6fa4;">Я – </div>
<div class="t" style="left:185.75px;top:19.00px;font-size:25.00px;color:#1a6fa4;transform:scaleX(1.0659);transform-origin:left;-webkit-text-stroke:0.3px #1a6fa4;">активный гражданин</div>
<div class="t" style="left:141.20px;top:47.00px;font-size:25.30px;color:#1a6fa4;font-weight:700;transform:scaleX(0.9441);transform-origin:left;-webkit-text-stroke:0.35px #1a6fa4;">Республики БЕЛАРУСЬ!</div>
<div class="t" style="left:354.60px;top:96.00px;font-size:23.50px;color:#1a6fa4;font-weight:700;transform:scaleX(0.9460);transform-origin:left;-webkit-text-stroke:0.35px #1a6fa4;">Тема 2</div>
<div class="t" style="left:217.40px;top:145.00px;font-size:23.00px;color:#e2081c;font-weight:700;transform:scaleX(0.9707);transform-origin:left;-webkit-text-stroke:0.35px #e2081c;">Быть достойным гражданином</div>
<div class="t" style="left:273.50px;top:169.00px;font-size:23.00px;color:#e2081c;font-weight:700;transform:scaleX(0.9415);transform-origin:left;-webkit-text-stroke:0.35px #e2081c;">Республики Беларусь</div>
<div class="t" style="left:238.60px;top:218.00px;font-size:23.50px;color:#188a40;font-weight:700;transform:scaleX(0.9326);transform-origin:left;-webkit-text-stroke:0.35px #188a40;">значит чтить законы своего</div>
<div class="t" style="left:237.90px;top:243.00px;font-size:23.50px;color:#188a40;font-weight:700;transform:scaleX(0.9174);transform-origin:left;-webkit-text-stroke:0.35px #188a40;">государства и брать на себя</div>
<div class="t" style="left:236.60px;top:267.00px;font-size:23.50px;color:#188a40;font-weight:700;transform:scaleX(0.9217);transform-origin:left;-webkit-text-stroke:0.35px #188a40;">ответственность за будущее</div>
<div class="t" style="left:317.60px;top:292.00px;font-size:23.50px;color:#188a40;font-weight:700;transform:scaleX(0.9032);transform-origin:left;-webkit-text-stroke:0.35px #188a40;">своей страны</div>
<div class="t" style="left:329.00px;top:370.00px;font-size:17.10px;color:#1c1c24;-webkit-text-stroke:0.25px #1c1c24;">Октябрь 2025 г.</div>
<div class="t" style="left:608.70px;top:63.00px;font-size:25.23px;color:#167c3c;font-weight:700;font-family:'Liberation Serif',serif;transform:scaleX(0.8264);transform-origin:left;-webkit-text-stroke:0.3px #167c3c;">Ш</div>
<div class="t" style="left:632.20px;top:63.00px;font-size:25.23px;color:#167c3c;font-family:'Liberation Serif',serif;transform:scaleX(0.9436);transform-origin:left;-webkit-text-stroke:0.3px #167c3c;">кола</div>
<div class="t" style="left:612.50px;top:81.00px;font-size:24.62px;color:#167c3c;font-weight:700;font-family:'Liberation Serif',serif;transform:scaleX(0.9563);transform-origin:left;-webkit-text-stroke:0.3px #167c3c;">А</div>
<div class="t" style="left:629.50px;top:81.00px;font-size:24.62px;color:#167c3c;font-family:'Liberation Serif',serif;transform:scaleX(0.9369);transform-origin:left;-webkit-text-stroke:0.3px #167c3c;">ктивного</div>
<div class="t" style="left:613.00px;top:100.00px;font-size:23.85px;color:#167c3c;font-weight:700;font-family:'Liberation Serif',serif;transform:scaleX(0.9887);transform-origin:left;-webkit-text-stroke:0.3px #167c3c;">Г</div>
<div class="t" style="left:628.50px;top:100.00px;font-size:23.85px;color:#167c3c;font-family:'Liberation Serif',serif;transform:scaleX(0.8773);transform-origin:left;-webkit-text-stroke:0.3px #167c3c;">ражданина</div>
</div>
<div class="a" style="left:12.4px;top:104.6px;width:122.4px;height:70.6px;background:#b5553d"></div>
<div class="a" style="left:14.3px;top:106.5px;width:768px;height:433px;background:#e9f4fc;overflow:hidden;transform:scale(0.1546);transform-origin:0 0">
<div class="a" style="left:0;top:0;width:106px;height:433px;background:#0091d9"></div>
<svg style="left:-202px;top:-104px" width="1024" height="576">
<g transform="translate(1.7,1.2)" fill="#4a6070" opacity="0.65" filter="url(#sh)"><path d="M216.2 284.4 Q220 282 225.5 280.7 L230.8 281.2 L250 279.2 L249.5 276 L250.5 267.7 L253.7 263.5 Q255 258.5 257.6 256.8 Q259.5 255 261.5 255.3 L268.8 258.3 L269.3 250 L269.6 240 L270.5 232.5 L273.9 226.7 L275.6 214.5 L285.2 195.4 L285.8 194 L284.3 186.7 L285.8 181.5 L284.8 173 L298 174 L318 172 L328 172 L331.2 193.6 L333.2 204 L329.6 218 L322.6 235.3 L319.4 244.5 L317.8 255 L318.2 263.6 Q319 267.5 321 269 Q323 271.5 325.6 273 L345.2 270.2 L358.4 269 Q360 268.8 361.6 269.5 L366.25 271.8 L384.2 275.7 L363.1 277.65 L356.9 278.4 L341.25 279.6 L329.5 281.6 Q326 282.5 324 284.3 Q321.5 286.5 321 290.2 L320.6 300 L322.9 324.8 L325.1 333.9 L326.3 356.4 L323.5 375.7 L320.6 393.9 L316.8 410.1 L313.5 412 L311 402 L290 397 L282.4 385.3 L281.5 380.5 L283.4 374.5 L278.8 328.2 L276.6 322.6 L275.5 310 L274.5 295.8 L266.2 300 Q263.5 301.5 261 301 L255.75 295.8 L253.1 291.7 L251.6 286.5 L250.5 285.4 L236 283.2 L250 281.6 L249.8 283.6 L236 282.6 L232.8 286 L227.6 286.5 Q222 286 216.2 284.4 Z"/><ellipse cx="289.80" cy="171.15" rx="13.29" ry="2.60" transform="rotate(-146.1 289.80 171.15)"/><ellipse cx="293.65" cy="169.10" rx="12.62" ry="2.60" transform="rotate(-143.6 293.65 169.10)"/><ellipse cx="299.50" cy="166.50" rx="12.34" ry="2.70" transform="rotate(-138.6 299.50 166.50)"/><ellipse cx="307.25" cy="164.15" rx="13.28" ry="2.80" transform="rotate(-117.9 307.25 164.15)"/><ellipse cx="317.05" cy="164.65" rx="13.82" ry="2.50" transform="rotate(-105.6 317.05 164.65)"/><ellipse cx="326.40" cy="168.20" rx="15.14" ry="2.80" transform="rotate(-102.7 326.40 168.20)"/><ellipse cx="283.60" cy="393.80" rx="11.05" ry="3.10" transform="rotate(137.4 283.60 393.80)"/><ellipse cx="286.80" cy="401.05" rx="12.56" ry="3.20" transform="rotate(128.5 286.80 401.05)"/><ellipse cx="292.85" cy="406.90" rx="13.77" ry="3.30" transform="rotate(121.4 292.85 406.90)"/><ellipse cx="300.40" cy="409.05" rx="13.39" ry="3.20" transform="rotate(116.9 300.40 409.05)"/><ellipse cx="308.45" cy="409.35" rx="12.11" ry="3.10" transform="rotate(111.4 308.45 409.35)"/></g>
<defs>
 <filter id="sh" x="-20%" y="-20%" width="140%" height="140%"><feGaussianBlur stdDeviation="1.2"/></filter>
 <clipPath id="c1"><path d="M285.4 197 Q310 203 334 212.6 L327 223 L320.2 233.5 Q296 232 273.2 232.6 L276 218 Z"/></clipPath>
 <clipPath id="c2"><path d="M280 338.6 Q302 333.5 324.6 332 L326 352 L324.3 370.3 Q302 370.6 284 371.3 L281.5 355 Z"/></clipPath>
</defs>
<g id="bird" fill="#fff"><path d="M216.2 284.4 Q220 282 225.5 280.7 L230.8 281.2 L250 279.2 L249.5 276 L250.5 267.7 L253.7 263.5 Q255 258.5 257.6 256.8 Q259.5 255 261.5 255.3 L268.8 258.3 L269.3 250 L269.6 240 L270.5 232.5 L273.9 226.7 L275.6 214.5 L285.2 195.4 L285.8 194 L284.3 186.7 L285.8 181.5 L284.8 173 L298 174 L318 172 L328 172 L331.2 193.6 L333.2 204 L329.6 218 L322.6 235.3 L319.4 244.5 L317.8 255 L318.2 263.6 Q319 267.5 321 269 Q323 271.5 325.6 273 L345.2 270.2 L358.4 269 Q360 268.8 361.6 269.5 L366.25 271.8 L384.2 275.7 L363.1 277.65 L356.9 278.4 L341.25 279.6 L329.5 281.6 Q326 282.5 324 284.3 Q321.5 286.5 321 290.2 L320.6 300 L322.9 324.8 L325.1 333.9 L326.3 356.4 L323.5 375.7 L320.6 393.9 L316.8 410.1 L313.5 412 L311 402 L290 397 L282.4 385.3 L281.5 380.5 L283.4 374.5 L278.8 328.2 L276.6 322.6 L275.5 310 L274.5 295.8 L266.2 300 Q263.5 301.5 261 301 L255.75 295.8 L253.1 291.7 L251.6 286.5 L250.5 285.4 L236 283.2 L250 281.6 L249.8 283.6 L236 282.6 L232.8 286 L227.6 286.5 Q222 286 216.2 284.4 Z"/><ellipse cx="289.80" cy="171.15" rx="13.29" ry="2.60" transform="rotate(-146.1 289.80 171.15)"/><ellipse cx="293.65" cy="169.10" rx="12.62" ry="2.60" transform="rotate(-143.6 293.65 169.10)"/><ellipse cx="299.50" cy="166.50" rx="12.34" ry="2.70" transform="rotate(-138.6 299.50 166.50)"/><ellipse cx="307.25" cy="164.15" rx="13.28" ry="2.80" transform="rotate(-117.9 307.25 164.15)"/><ellipse cx="317.05" cy="164.65" rx="13.82" ry="2.50" transform="rotate(-105.6 317.05 164.65)"/><ellipse cx="326.40" cy="168.20" rx="15.14" ry="2.80" transform="rotate(-102.7 326.40 168.20)"/><ellipse cx="283.60" cy="393.80" rx="11.05" ry="3.10" transform="rotate(137.4 283.60 393.80)"/><ellipse cx="286.80" cy="401.05" rx="12.56" ry="3.20" transform="rotate(128.5 286.80 401.05)"/><ellipse cx="292.85" cy="406.90" rx="13.77" ry="3.30" transform="rotate(121.4 292.85 406.90)"/><ellipse cx="300.40" cy="409.05" rx="13.39" ry="3.20" transform="rotate(116.9 300.40 409.05)"/><ellipse cx="308.45" cy="409.35" rx="12.11" ry="3.10" transform="rotate(111.4 308.45 409.35)"/></g>
<path id="leggap" d="M236.5 282.9 L249.6 281.9 L249.6 283.3 Z" fill="#0091d9"/>
<g fill="#1b8fd0">
 <path d="M285.4 197 Q310 203 334 212.6 L327 223 L320.2 233.5 Q296 232 273.2 232.6 L276 218 Z"/>
 <path d="M285.4 194.9 Q312 200.5 337.6 210.6" fill="none" stroke="#1b8fd0" stroke-width="1.1"/>
 <path d="M271.6 235.3 Q300 235.5 323.6 238.9" fill="none" stroke="#1b8fd0" stroke-width="1.1"/>
 <path d="M280 338.6 Q302 333.5 324.6 332 L326 352 L324.3 370.3 Q302 370.6 284 371.3 L281.5 355 Z"/>
 <path d="M279 329.2 Q300 327 323.4 327" fill="none" stroke="#1b8fd0" stroke-width="1.1"/>
 <path d="M284 376.3 Q310 374.6 333.4 374.3" fill="none" stroke="#1b8fd0" stroke-width="1.1"/>
</g>
<g fill="#fff" clip-path="url(#c1)">
 <g transform="rotate(12 282 215)">
  <rect x="277" y="201" width="2.2" height="2.6"/><rect x="280.6" y="201" width="4" height="1.4"/><rect x="283.4" y="203" width="1.4" height="3"/>
  <rect x="277" y="206" width="4" height="1.4"/><rect x="278" y="209" width="2.4" height="2.4"/><rect x="281.6" y="209" width="3" height="1.4"/>
  <rect x="276" y="213" width="4" height="1.4"/><rect x="281" y="213" width="1.4" height="3"/><rect x="277" y="217" width="2.6" height="2.4"/>
  <rect x="275" y="221" width="4" height="1.4"/><rect x="280" y="220.6" width="2.8" height="2.6"/><rect x="275.6" y="225" width="2.6" height="2.6"/>
  <rect x="279.5" y="225.4" width="3.2" height="1.4"/><rect x="274.6" y="229" width="4" height="1.4"/>
 </g>
 <g transform="rotate(-28 302 220)">
  <rect x="296" y="215.4" width="13" height="1.5"/><rect x="296" y="219.4" width="13" height="1.5"/><rect x="296" y="223.4" width="13" height="1.5"/>
  <rect x="299" y="212.5" width="1.5" height="13"/><rect x="303" y="212.5" width="1.5" height="13"/><rect x="306.6" y="213.5" width="1.3" height="11"/>
 </g>
 <g transform="rotate(10 321 225)">
  <rect x="314.5" y="217" width="3" height="1.5"/><rect x="318.6" y="217" width="5" height="1.5"/><rect x="314.5" y="220.4" width="1.5" height="3"/>
  <rect x="317.6" y="220.6" width="3" height="2.6"/><rect x="322" y="220.4" width="4" height="1.5"/><rect x="314.5" y="225" width="4" height="1.5"/>
  <rect x="320" y="224.6" width="1.5" height="3.4"/><rect x="323" y="225" width="3" height="2.6"/><rect x="315" y="229" width="4" height="2.6"/><rect x="320.4" y="229.6" width="5" height="1.5"/>
 </g>
 <path d="M292 206 v24 M295 201 v6 M296 232 v-4 M311 208 v22 M313 206 v6 M327 214 v-4" stroke="#fff" stroke-width="0.5" stroke-dasharray="1.6 1.2" opacity="0.85"/>
 <rect x="302" y="203.2" width="2.4" height="1.4"/><rect x="322" y="210" width="2" height="1.4"/>
</g>
<g fill="#fff" clip-path="url(#c2)">
 <g transform="rotate(-38 305.6 351.5)">
  <rect x="297.6" y="343.5" width="16" height="16" fill="none" stroke="#fff" stroke-width="1.7"/>
  <rect x="302.2" y="348.1" width="6.8" height="6.8" fill="none" stroke="#fff" stroke-width="0.9"/>
  <rect x="304.6" y="350.5" width="2" height="2"/>
  <path d="M299.6 346 h1.2 M299.6 349 h1.2 M299.6 352 h1.2 M299.6 355 h1.2 M310.6 346 h1.2 M310.6 349 h1.2 M310.6 352 h1.2 M310.6 355 h1.2 M302 345.6 v1.2 M305 345.6 v1.2 M308 345.6 v1.2 M302 356.8 v1.2 M305 356.8 v1.2 M308 356.8 v1.2" stroke="#fff" stroke-width="1"/>
 </g>
 <g transform="rotate(-20 288.5 356)">
  <rect x="284" y="352" width="9" height="1.4"/><rect x="284" y="356" width="9" height="1.4"/><rect x="284" y="360" width="9" height="1.4"/>
  <rect x="286.4" y="349" width="1.4" height="14"/><rect x="289.8" y="349" width="1.4" height="14"/>
 </g>
 <path d="M320.5 341 l5 6 M325.5 341 l-5 6 M320.5 349 l5 6 M325.5 349 l-5 6 M320.5 357 l5 5 M325.5 357 l-5 5" stroke="#fff" stroke-width="1.2"/>
 <path d="M312.2 367.6 l4.4 -10 4.4 10 M314.4 367.6 l2.2 -5 2.2 5" stroke="#fff" stroke-width="0.9" fill="none"/>
 <path d="M286 340 l2 1.6 -2.4 0.6z M311 334 l2.4 1.4 -2.4 0.8z"/>
 <path d="M293 338 v30 M296 368 v-4 M318 336 v18" stroke="#fff" stroke-width="0.5" stroke-dasharray="1.6 1.2" opacity="0.8"/>
</g>

<path d="M827.91 162.96A64.8 64.8 0 0 1 836.89 153.12L845.01 162.23A52.6 52.6 0 0 0 837.72 170.21Z" fill="#4ca535"/>
<path d="M837.06 152.97A64.8 64.8 0 0 1 847.89 145.21L853.94 155.81A52.6 52.6 0 0 0 845.15 162.10Z" fill="#12893f"/>
<path d="M849.38 144.39A64.8 64.8 0 0 1 861.70 139.34L865.15 151.04A52.6 52.6 0 0 0 855.14 155.14Z" fill="#34c246"/>
<path d="M863.45 138.85A64.8 64.8 0 0 1 876.61 136.79L877.25 148.97A52.6 52.6 0 0 0 866.56 150.65Z" fill="#2fcb45"/>
<path d="M878.53 136.72A64.8 64.8 0 0 1 891.81 137.79L889.59 149.78A52.6 52.6 0 0 0 878.81 148.91Z" fill="#54d68e"/>
<path d="M893.69 138.16A64.8 64.8 0 0 1 906.36 142.30L901.39 153.45A52.6 52.6 0 0 0 891.12 150.09Z" fill="#45a836"/>
<path d="M907.59 142.87A64.8 64.8 0 0 1 919.00 149.75L911.66 159.49A52.6 52.6 0 0 0 902.40 153.91Z" fill="#3f9f33"/>
<path d="M919.98 150.51A64.8 64.8 0 0 1 929.57 159.76L920.23 167.62A52.6 52.6 0 0 0 912.46 160.11Z" fill="#33c46f"/>
<path d="M930.43 160.81A64.8 64.8 0 0 1 937.69 171.98L926.83 177.54A52.6 52.6 0 0 0 920.94 168.47Z" fill="#17883f"/>
<path d="M938.54 173.71A64.8 64.8 0 0 1 942.98 186.26L931.13 189.13A52.6 52.6 0 0 0 927.52 178.94Z" fill="#45a836"/>
<path d="M943.36 187.92A64.8 64.8 0 0 1 944.80 201.16L932.60 201.22A52.6 52.6 0 0 0 931.43 190.47Z" fill="#1a7d36"/>
<path d="M944.77 203.42A64.8 64.8 0 0 1 943.01 216.63L931.15 213.78A52.6 52.6 0 0 0 932.58 203.06Z" fill="#33c846"/>
<path d="M942.82 217.40A64.8 64.8 0 0 1 938.24 229.91L927.28 224.56A52.6 52.6 0 0 0 930.99 214.40Z" fill="#33c846"/>
<path d="M937.63 231.12A64.8 64.8 0 0 1 930.36 242.28L920.88 234.60A52.6 52.6 0 0 0 926.78 225.54Z" fill="#45a836"/>
<path d="M928.76 244.18A64.8 64.8 0 0 1 919.00 253.25L911.66 243.51A52.6 52.6 0 0 0 919.58 236.15Z" fill="#45a836"/>
<path d="M918.09 253.92A64.8 64.8 0 0 1 906.56 260.61L901.56 249.48A52.6 52.6 0 0 0 910.92 244.05Z" fill="#17883f"/>
<path d="M905.84 260.93A64.8 64.8 0 0 1 893.14 264.95L890.67 253.01A52.6 52.6 0 0 0 900.97 249.74Z" fill="#54d68e"/>
<path d="M891.14 265.34A64.8 64.8 0 0 1 877.85 266.26L878.26 254.07A52.6 52.6 0 0 0 889.04 253.32Z" fill="#45a836"/>
<path d="M876.16 266.19A64.8 64.8 0 0 1 863.01 264.03L866.21 252.26A52.6 52.6 0 0 0 876.88 254.01Z" fill="#17883f"/>
<path d="M862.14 263.79A64.8 64.8 0 0 1 849.78 258.82L855.47 248.03A52.6 52.6 0 0 0 865.50 252.06Z" fill="#17883f"/>
<path d="M848.29 258.01A64.8 64.8 0 0 1 837.40 250.33L845.42 241.14A52.6 52.6 0 0 0 854.26 247.37Z" fill="#54d68e"/>
<path d="M837.23 250.18A64.8 64.8 0 0 1 828.18 240.41L837.94 233.08A52.6 52.6 0 0 0 845.28 241.02Z" fill="#45a836"/>
<path d="M823.51 147.14A78.4 78.4 0 0 1 832.93 138.80L840.01 148.24A66.6 66.6 0 0 0 832.01 155.32Z" fill="#f7bf1e"/>
<path d="M834.36 137.75A78.4 78.4 0 0 1 845.14 131.28L850.39 141.85A66.6 66.6 0 0 0 841.23 147.35Z" fill="#f8ef8c"/>
<path d="M846.37 130.68A78.4 78.4 0 0 1 858.13 126.21L861.42 137.54A66.6 66.6 0 0 0 851.43 141.34Z" fill="#f8bf1e"/>
<path d="M859.97 125.70A78.4 78.4 0 0 1 872.35 123.47L873.50 135.22A66.6 66.6 0 0 0 862.99 137.11Z" fill="#f4e043"/>
<path d="M874.39 123.30A78.4 78.4 0 0 1 886.97 123.41L885.92 135.16A66.6 66.6 0 0 0 875.24 135.07Z" fill="#f0dc2e"/>
<path d="M888.88 123.60A78.4 78.4 0 0 1 901.22 126.02L898.02 137.38A66.6 66.6 0 0 0 887.54 135.33Z" fill="#f8f08e"/>
<path d="M903.05 126.57A78.4 78.4 0 0 1 914.74 131.22L909.51 141.79A66.6 66.6 0 0 0 899.58 137.84Z" fill="#f6d872"/>
<path d="M915.84 131.77A78.4 78.4 0 0 1 926.52 138.40L919.52 147.89A66.6 66.6 0 0 0 910.44 142.26Z" fill="#f8bf1e"/>
<path d="M927.73 139.30A78.4 78.4 0 0 1 937.06 147.73L928.47 155.82A66.6 66.6 0 0 0 920.54 148.66Z" fill="#f6e236"/>
<path d="M939.26 150.17A78.4 78.4 0 0 1 946.70 160.30L936.66 166.50A66.6 66.6 0 0 0 930.34 157.89Z" fill="#eee140"/>
<path d="M952.17 232.13A78.4 78.4 0 0 1 946.34 243.28L936.36 236.99A66.6 66.6 0 0 0 941.31 227.52Z" fill="#e8230f"/>
<path d="M945.68 244.31A78.4 78.4 0 0 1 937.99 254.26L929.26 246.32A66.6 66.6 0 0 0 935.79 237.87Z" fill="#f06464"/>
<path d="M936.78 255.57A78.4 78.4 0 0 1 927.40 263.95L920.27 254.55A66.6 66.6 0 0 0 928.23 247.43Z" fill="#e83232"/>
<path d="M926.30 264.77A78.4 78.4 0 0 1 915.59 271.35L910.24 260.84A66.6 66.6 0 0 0 919.33 255.24Z" fill="#e82a3a"/>
<path d="M914.74 271.78A78.4 78.4 0 0 1 903.05 276.43L899.58 265.16A66.6 66.6 0 0 0 909.51 261.21Z" fill="#cf1a2a"/>
<path d="M901.08 277.01A78.4 78.4 0 0 1 888.74 279.41L887.42 267.68A66.6 66.6 0 0 0 897.91 265.65Z" fill="#f07070"/>
<path d="M886.97 279.59A78.4 78.4 0 0 1 874.39 279.70L875.24 267.93A66.6 66.6 0 0 0 885.92 267.84Z" fill="#f03242"/>
<path d="M872.08 279.50A78.4 78.4 0 0 1 859.71 277.23L862.76 265.83A66.6 66.6 0 0 0 873.27 267.76Z" fill="#f03242"/>
<path d="M858.26 276.83A78.4 78.4 0 0 1 846.50 272.38L851.54 261.71A66.6 66.6 0 0 0 861.53 265.49Z" fill="#f07070"/>
<path d="M845.26 271.78A78.4 78.4 0 0 1 834.47 265.33L841.33 255.72A66.6 66.6 0 0 0 850.49 261.21Z" fill="#d02232"/>
<path d="M833.37 264.52A78.4 78.4 0 0 1 823.89 256.26L832.33 248.01A66.6 66.6 0 0 0 840.38 255.04Z" fill="#f03242"/>
<rect x="586" y="307.9" width="13.2" height="2.9" fill="#1d7a44"/>
</svg>
<div class="t" style="left:141.20px;top:19.00px;font-size:25.30px;color:#1a6fa4;font-weight:700;transform:scaleX(0.9619);transform-origin:left;-webkit-text-stroke:0.35px #1a6fa4;">Я – </div>
<div class="t" style="left:185.75px;top:19.00px;font-size:25.00px;color:#1a6fa4;transform:scaleX(1.0659);transform-origin:left;-webkit-text-stroke:0.3px #1a6fa4;">активный гражданин</div>
<div class="t" style="left:141.20px;top:47.00px;font-size:25.30px;color:#1a6fa4;font-weight:700;transform:scaleX(0.9441);transform-origin:left;-webkit-text-stroke:0.35px #1a6fa4;">Республики БЕЛАРУСЬ!</div>
<div class="t" style="left:354.60px;top:96.00px;font-size:23.50px;color:#1a6fa4;font-weight:700;transform:scaleX(0.9460);transform-origin:left;-webkit-text-stroke:0.35px #1a6fa4;">Тема 2</div>
<div class="t" style="left:217.40px;top:145.00px;font-size:23.00px;color:#e2081c;font-weight:700;transform:scaleX(0.9707);transform-origin:left;-webkit-text-stroke:0.35px #e2081c;">Быть достойным гражданином</div>
<div class="t" style="left:273.50px;top:169.00px;font-size:23.00px;color:#e2081c;font-weight:700;transform:scaleX(0.9415);transform-origin:left;-webkit-text-stroke:0.35px #e2081c;">Республики Беларусь</div>
<div class="t" style="left:238.60px;top:218.00px;font-size:23.50px;color:#188a40;font-weight:700;transform:scaleX(0.9326);transform-origin:left;-webkit-text-stroke:0.35px #188a40;">значит чтить законы своего</div>
<div class="t" style="left:237.90px;top:243.00px;font-size:23.50px;color:#188a40;font-weight:700;transform:scaleX(0.9174);transform-origin:left;-webkit-text-stroke:0.35px #188a40;">государства и брать на себя</div>
<div class="t" style="left:236.60px;top:267.00px;font-size:23.50px;color:#188a40;font-weight:700;transform:scaleX(0.9217);transform-origin:left;-webkit-text-stroke:0.35px #188a40;">ответственность за будущее</div>
<div class="t" style="left:317.60px;top:292.00px;font-size:23.50px;color:#188a40;font-weight:700;transform:scaleX(0.9032);transform-origin:left;-webkit-text-stroke:0.35px #188a40;">своей страны</div>
<div class="t" style="left:329.00px;top:370.00px;font-size:17.10px;color:#1c1c24;-webkit-text-stroke:0.25px #1c1c24;">Октябрь 2025 г.</div>
<div class="t" style="left:608.70px;top:63.00px;font-size:25.23px;color:#167c3c;font-weight:700;font-family:'Liberation Serif',serif;transform:scaleX(0.8264);transform-origin:left;-webkit-text-stroke:0.3px #167c3c;">Ш</div>
<div class="t" style="left:632.20px;top:63.00px;font-size:25.23px;color:#167c3c;font-family:'Liberation Serif',serif;transform:scaleX(0.9436);transform-origin:left;-webkit-text-stroke:0.3px #167c3c;">кола</div>
<div class="t" style="left:612.50px;top:81.00px;font-size:24.62px;color:#167c3c;font-weight:700;font-family:'Liberation Serif',serif;transform:scaleX(0.9563);transform-origin:left;-webkit-text-stroke:0.3px #167c3c;">А</div>
<div class="t" style="left:629.50px;top:81.00px;font-size:24.62px;color:#167c3c;font-family:'Liberation Serif',serif;transform:scaleX(0.9369);transform-origin:left;-webkit-text-stroke:0.3px #167c3c;">ктивного</div>
<div class="t" style="left:613.00px;top:100.00px;font-size:23.85px;color:#167c3c;font-weight:700;font-family:'Liberation Serif',serif;transform:scaleX(0.9887);transform-origin:left;-webkit-text-stroke:0.3px #167c3c;">Г</div>
<div class="t" style="left:628.50px;top:100.00px;font-size:23.85px;color:#167c3c;font-family:'Liberation Serif',serif;transform:scaleX(0.8773);transform-origin:left;-webkit-text-stroke:0.3px #167c3c;">ражданина</div>
</div>
<div class="a" style="left:14px;top:184px;width:119px;height:67px;background:#fff;overflow:hidden"></div>
<div class="a" style="left:14px;top:262px;width:119px;height:67px;background:#fff;overflow:hidden"></div>
<div class="a" style="left:14px;top:340px;width:119px;height:67px;background:#fff;overflow:hidden"></div>
<div class="a" style="left:14px;top:418px;width:119px;height:67px;background:#fff;overflow:hidden"></div>
<div class="a" style="left:14px;top:496px;width:119px;height:52px;background:#fff;overflow:hidden"></div>
<div class="a" style="left:14px;top:184px;width:119px;height:13px;background:linear-gradient(90deg,#dbeef8,#eef7fc 60%,#e6f2f9)"></div>
<div class="a" style="left:14.6px;top:184.6px;width:5px;height:12.4px;background:#1a8cd4"></div>
<div class="a" style="left:17.6px;top:186.0px;width:2px;height:2px;background:#fff;border-radius:1px"></div>
<div class="a" style="left:17.6px;top:189.6px;width:2px;height:2px;background:#fff;border-radius:1px"></div>
<div class="a" style="left:17.6px;top:193.2px;width:2px;height:2px;background:#fff;border-radius:1px"></div>
<div class="a" style="left:123px;top:186.2px;width:8px;height:8px;border-radius:50%;border:1.4px solid #6ac060;border-bottom-color:#e06050;border-top-color:#e8d850"></div>
<div class="a" style="left:33.0px;top:187.2px;width:84px;height:1.3px;background:#3f8f7a;opacity:0.55"></div>
<div class="a" style="left:32.0px;top:190.6px;width:86px;height:1.3px;background:#3f8f7a;opacity:0.55"></div>
<div class="a" style="left:31.0px;top:194.0px;width:88px;height:1.3px;background:#3f8f7a;opacity:0.55"></div>
<div class="a" style="left:17.3px;top:207px;width:22.4px;height:33px;background:#d42530"></div>
<div class="a" style="left:17.3px;top:232px;width:22.4px;height:8px;background:#3a9a4a"></div>
<div class="a" style="left:17.3px;top:229.5px;width:22.4px;height:4px;border-radius:50%;background:#fff;opacity:0.9"></div>
<div class="a" style="left:30px;top:211px;width:5px;height:5px;border-radius:50%;background:#f0c040"></div>
<div class="a" style="left:21px;top:219px;width:15px;height:1px;background:#fff;opacity:.8"></div><div class="a" style="left:21px;top:221.5px;width:15px;height:1px;background:#fff;opacity:.8"></div><div class="a" style="left:23px;top:224px;width:11px;height:1px;background:#fff;opacity:.8"></div>
<div class="a" style="left:48.3px;top:205.7px;width:78.5px;height:4.6px;border:0.5px solid #707070;background:#f2f2ea"></div>
<div class="a" style="left:50px;top:207.4px;width:50px;height:1.1px;background:#555;opacity:.75"></div>
<div class="a" style="left:43.6px;top:206.0px;width:2.6px;height:4.2px;background:#efbf80;opacity:.9"></div>
<div class="a" style="left:48.3px;top:214px;width:78.5px;height:4.0px;border:0.5px solid #707070;background:#f2f2ea"></div>
<div class="a" style="left:50px;top:215.4px;width:30px;height:1.1px;background:#555;opacity:.75"></div>
<div class="a" style="left:43.6px;top:214.0px;width:2.6px;height:4.2px;background:#efbf80;opacity:.9"></div>
<div class="a" style="left:48.3px;top:219.3px;width:78.5px;height:7.1px;border:0.5px solid #707070;background:#f2f2ea"></div>
<div class="a" style="left:50px;top:220.7px;width:74px;height:1.1px;background:#555;opacity:.75"></div>
<div class="a" style="left:50px;top:224.1px;width:52px;height:1.1px;background:#555;opacity:.75"></div>
<div class="a" style="left:43.6px;top:220.9px;width:2.6px;height:4.2px;background:#efbf80;opacity:.9"></div>
<div class="a" style="left:48.3px;top:231.5px;width:78.5px;height:3.6px;border:0.5px solid #707070;background:#f2f2ea"></div>
<div class="a" style="left:50px;top:232.7px;width:48px;height:1.1px;background:#555;opacity:.75"></div>
<div class="a" style="left:43.6px;top:231.3px;width:2.6px;height:4.2px;background:#efbf80;opacity:.9"></div>
<div class="a" style="left:48.3px;top:239.6px;width:78.5px;height:4.0px;border:0.5px solid #707070;background:#f2f2ea"></div>
<div class="a" style="left:50px;top:241.0px;width:60px;height:1.1px;background:#555;opacity:.75"></div>
<div class="a" style="left:43.6px;top:239.6px;width:2.6px;height:4.2px;background:#efbf80;opacity:.9"></div>
<div class="a" style="left:14px;top:262px;width:119px;height:13px;background:linear-gradient(90deg,#dbeef8,#eef7fc 60%,#e6f2f9)"></div>
<div class="a" style="left:14.6px;top:262.6px;width:5px;height:12.4px;background:#1a8cd4"></div>
<div class="a" style="left:17.6px;top:264.0px;width:2px;height:2px;background:#fff;border-radius:1px"></div>
<div class="a" style="left:17.6px;top:267.6px;width:2px;height:2px;background:#fff;border-radius:1px"></div>
<div class="a" style="left:17.6px;top:271.2px;width:2px;height:2px;background:#fff;border-radius:1px"></div>
<div class="a" style="left:123px;top:264.2px;width:8px;height:8px;border-radius:50%;border:1.4px solid #6ac060;border-bottom-color:#e06050;border-top-color:#e8d850"></div>
<div class="a" style="left:55.0px;top:266.8px;width:48px;height:2px;background:#2f9a6a;opacity:0.6"></div>
<div class="a" style="left:19.2px;top:276.7px;width:34.8px;height:45.2px;background:linear-gradient(180deg,#dccca8,#e4d8c0 50%,#ddd0b4)"></div>
<div class="a" style="left:23.4px;top:277.3px;width:22.3px;height:16.3px;border-radius:50%;background:radial-gradient(circle,#e0c890 0,#c8a860 50%,#d8c498 72%,rgba(220,204,168,0) 80%)"></div>
<div class="a" style="left:29.6px;top:301px;width:14.6px;height:20.9px;background:#2a3048;border-radius:3px 3px 0 0"></div>
<div class="a" style="left:34.8px;top:296.5px;width:4.5px;height:5.2px;background:#d8c0a8;border-radius:50%"></div>
<div class="a" style="left:36.6px;top:306.5px;width:13.9px;height:15.4px;background:#ece2cc"></div>
<div class="a" style="left:22.0px;top:312.9px;width:11.8px;height:9.0px;background:#e8dcc4;border-top:1.5px solid #6a5040"></div>
<div class="a" style="left:58.5px;top:278.0px;width:70.5px;height:0.9px;background:#9a9a9a;opacity:0.7"></div>
<div class="a" style="left:58.5px;top:280.9px;width:70.5px;height:0.9px;background:#9a9a9a;opacity:0.7"></div>
<div class="a" style="left:58.5px;top:283.8px;width:70.5px;height:0.9px;background:#9a9a9a;opacity:0.7"></div>
<div class="a" style="left:58.5px;top:286.7px;width:42.3px;height:0.9px;background:#9a9a9a;opacity:0.7"></div>
<div class="a" style="left:58.5px;top:289.6px;width:70.5px;height:0.9px;background:#9a9a9a;opacity:0.7"></div>
<div class="a" style="left:58.5px;top:292.5px;width:70.5px;height:0.9px;background:#9a9a9a;opacity:0.7"></div>
<div class="a" style="left:58.5px;top:295.4px;width:70.5px;height:0.9px;background:#9a9a9a;opacity:0.7"></div>
<div class="a" style="left:58.5px;top:298.3px;width:42.3px;height:0.9px;background:#9a9a9a;opacity:0.7"></div>
<div class="a" style="left:58.5px;top:301.2px;width:70.5px;height:0.9px;background:#9a9a9a;opacity:0.7"></div>
<div class="a" style="left:58.5px;top:304.1px;width:70.5px;height:0.9px;background:#9a9a9a;opacity:0.7"></div>
<div class="a" style="left:58.5px;top:307.0px;width:70.5px;height:0.9px;background:#9a9a9a;opacity:0.7"></div>
<div class="a" style="left:58.5px;top:309.9px;width:42.3px;height:0.9px;background:#9a9a9a;opacity:0.7"></div>
<div class="a" style="left:58.5px;top:312.8px;width:70.5px;height:0.9px;background:#9a9a9a;opacity:0.7"></div>
<div class="a" style="left:58.5px;top:315.7px;width:70.5px;height:0.9px;background:#9a9a9a;opacity:0.7"></div>
<div class="a" style="left:58.5px;top:318.6px;width:70.5px;height:0.9px;background:#9a9a9a;opacity:0.7"></div>
<div class="a" style="left:58.5px;top:321.5px;width:42.3px;height:0.9px;background:#9a9a9a;opacity:0.7"></div>
<div class="a" style="left:14px;top:340px;width:119px;height:13px;background:linear-gradient(90deg,#dbeef8,#eef7fc 60%,#e6f2f9)"></div>
<div class="a" style="left:14.6px;top:340.6px;width:5px;height:12.4px;background:#1a8cd4"></div>
<div class="a" style="left:17.6px;top:342.0px;width:2px;height:2px;background:#fff;border-radius:1px"></div>
<div class="a" style="left:17.6px;top:345.6px;width:2px;height:2px;background:#fff;border-radius:1px"></div>
<div class="a" style="left:17.6px;top:349.2px;width:2px;height:2px;background:#fff;border-radius:1px"></div>
<div class="a" style="left:123px;top:342.2px;width:8px;height:8px;border-radius:50%;border:1.4px solid #6ac060;border-bottom-color:#e06050;border-top-color:#e8d850"></div>
<div class="a" style="left:56.0px;top:343.4px;width:48px;height:2px;background:#2f9a6a;opacity:0.6"></div>
<div class="a" style="left:21.2px;top:353.8px;width:35px;height:45.5px;background:linear-gradient(180deg,#dccca8,#e4d8c0 50%,#ddd0b4)"></div>
<div class="a" style="left:25.4px;top:354.4px;width:22.4px;height:16.4px;border-radius:50%;background:radial-gradient(circle,#e0c890 0,#c8a860 50%,#d8c498 72%,rgba(220,204,168,0) 80%)"></div>
<div class="a" style="left:31.6px;top:378.4px;width:14.7px;height:20.9px;background:#2a3048;border-radius:3px 3px 0 0"></div>
<div class="a" style="left:36.8px;top:373.8px;width:4.5px;height:5.2px;background:#d8c0a8;border-radius:50%"></div>
<div class="a" style="left:38.7px;top:383.8px;width:14.0px;height:15.5px;background:#ece2cc"></div>
<div class="a" style="left:24.0px;top:390.2px;width:11.9px;height:9.1px;background:#e8dcc4;border-top:1.5px solid #6a5040"></div>
<div class="a" style="left:61px;top:358.6px;width:41px;height:1.4px;background:#222"></div>
<div class="a" style="left:61px;top:362.0px;width:63.0px;height:0.9px;background:#9a9a9a;opacity:0.7"></div>
<div class="a" style="left:61px;top:364.9px;width:63.0px;height:0.9px;background:#9a9a9a;opacity:0.7"></div>
<div class="a" style="left:61px;top:367.9px;width:63.0px;height:0.9px;background:#9a9a9a;opacity:0.7"></div>
<div class="a" style="left:61px;top:370.9px;width:37.8px;height:0.9px;background:#9a9a9a;opacity:0.7"></div>
<div class="a" style="left:61px;top:373.8px;width:63.0px;height:0.9px;background:#9a9a9a;opacity:0.7"></div>
<div class="a" style="left:61px;top:376.8px;width:63.0px;height:0.9px;background:#9a9a9a;opacity:0.7"></div>
<div class="a" style="left:61px;top:379.7px;width:63.0px;height:0.9px;background:#9a9a9a;opacity:0.7"></div>
<div class="a" style="left:61px;top:382.6px;width:37.8px;height:0.9px;background:#9a9a9a;opacity:0.7"></div>
<div class="a" style="left:61px;top:385.6px;width:63.0px;height:0.9px;background:#9a9a9a;opacity:0.7"></div>
<div class="a" style="left:61px;top:388.6px;width:63.0px;height:0.9px;background:#9a9a9a;opacity:0.7"></div>
<div class="a" style="left:61px;top:391.5px;width:63.0px;height:0.9px;background:#9a9a9a;opacity:0.7"></div>
<div class="a" style="left:14px;top:418px;width:119px;height:8.5px;background:linear-gradient(90deg,#dbeef8,#eef7fc 60%,#e6f2f9)"></div>
<div class="a" style="left:14.6px;top:418.6px;width:5px;height:7.9px;background:#1a8cd4"></div>
<div class="a" style="left:17.6px;top:420.0px;width:2px;height:2px;background:#fff;border-radius:1px"></div>
<div class="a" style="left:17.6px;top:423.6px;width:2px;height:2px;background:#fff;border-radius:1px"></div>
<div class="a" style="left:17.6px;top:427.2px;width:2px;height:2px;background:#fff;border-radius:1px"></div>
<div class="a" style="left:123px;top:420.2px;width:8px;height:8px;border-radius:50%;border:1.4px solid #6ac060;border-bottom-color:#e06050;border-top-color:#e8d850"></div>
<div class="a" style="left:44.0px;top:421.4px;width:70px;height:2px;background:#2f9a6a;opacity:0.6"></div>
<div class="a" style="left:24px;top:427.2px;width:99px;height:0.9px;background:#8a8a8a;opacity:0.7"></div>
<div class="a" style="left:24px;top:429.8px;width:99px;height:0.9px;background:#8a8a8a;opacity:0.7"></div>
<div class="a" style="left:24px;top:432.4px;width:40px;height:0.9px;background:#8a8a8a;opacity:0.7"></div>
<div class="a" style="left:24px;top:435.4px;width:99px;height:0.9px;background:#8a8a8a;opacity:0.7"></div>
<div class="a" style="left:24px;top:438px;width:60px;height:0.9px;background:#8a8a8a;opacity:0.7"></div>
<div class="a" style="left:24px;top:441px;width:99px;height:0.9px;background:#8a8a8a;opacity:0.7"></div>
<div class="a" style="left:24px;top:443.6px;width:30px;height:0.9px;background:#8a8a8a;opacity:0.7"></div>
<div class="a" style="left:24px;top:448.6px;width:60px;height:0.9px;background:#8a8a8a;opacity:0.7"></div>
<div class="a" style="left:24px;top:451.2px;width:70px;height:0.9px;background:#8a8a8a;opacity:0.7"></div>
<div class="a" style="left:24px;top:453.8px;width:80px;height:0.9px;background:#8a8a8a;opacity:0.7"></div>
<div class="a" style="left:23.2px;top:458.2px;width:44.8px;height:23px;background:radial-gradient(ellipse at 70% 10%,#9a88f0 0,#4a40c0 25%,#202070 50%,#0c0c30 85%)"></div>
<div class="a" style="left:77.3px;top:458.2px;width:44.8px;height:23px;background:linear-gradient(180deg,#2a30c0 0,#5060e0 30%,#8090f0 38%,#d8dae8 42%,#e8e8f0)"></div>
<div class="a" style="left:78px;top:468px;width:43px;height:2px;background:repeating-linear-gradient(90deg,#334 0 2px,#c8c8d8 2px 5px)"></div>
<div class="a" style="left:78px;top:473.5px;width:43px;height:2px;background:repeating-linear-gradient(90deg,#445 0 3px,#dde 3px 7px)"></div>
<div class="a" style="left:14px;top:496px;width:119px;height:13px;background:linear-gradient(90deg,#dbeef8,#eef7fc 60%,#e6f2f9)"></div>
<div class="a" style="left:14.6px;top:496.6px;width:5px;height:12.4px;background:#1a8cd4"></div>
<div class="a" style="left:17.6px;top:498.0px;width:2px;height:2px;background:#fff;border-radius:1px"></div>
<div class="a" style="left:17.6px;top:501.6px;width:2px;height:2px;background:#fff;border-radius:1px"></div>
<div class="a" style="left:17.6px;top:505.2px;width:2px;height:2px;background:#fff;border-radius:1px"></div>
<div class="a" style="left:123px;top:498.2px;width:8px;height:8px;border-radius:50%;border:1.4px solid #6ac060;border-bottom-color:#e06050;border-top-color:#e8d850"></div>
<div class="a" style="left:46.0px;top:499.2px;width:59px;height:1.6px;background:#6a6a50;opacity:0.6"></div>
<div class="a" style="left:55.5px;top:502.9px;width:40px;height:1.6px;background:#6a6a50;opacity:0.6"></div>
<div class="a" style="left:34.4px;top:516.5px;width:71px;height:31.5px;background:#efc4cf;opacity:.8;clip-path:polygon(0 0,100% 22%,100% 100%,0 100%)"></div>
<div class="a" style="left:38.8px;top:513.6px;width:18.3px;height:5.1px;background:#f7c98e;border:0.5px solid #e6a45a"></div>
<div class="a" style="left:63px;top:513.6px;width:13.9px;height:5.1px;background:#f7c98e;border:0.5px solid #e6a45a"></div>
<div class="a" style="left:86.4px;top:513.6px;width:16.1px;height:5.1px;background:#f7c98e;border:0.5px solid #e6a45a"></div>
<div class="a" style="left:39.5px;top:523px;width:16.1px;height:6.7px;background:#f7c98e;border:0.5px solid #e6a45a"></div>
<div class="a" style="left:63px;top:523px;width:14.6px;height:6.7px;background:#f7c98e;border:0.5px solid #e6a45a"></div>
<div class="a" style="left:80.5px;top:525.3px;width:13.2px;height:4.4px;background:#f7c98e;border:0.5px solid #e6a45a"></div>
<div class="a" style="left:95.9px;top:525.3px;width:9.5px;height:4.4px;background:#f7c98e;border:0.5px solid #e6a45a"></div>
<div class="a" style="left:35px;top:534.9px;width:10.4px;height:3.6px;background:#f7c98e;border:0.5px solid #e6a45a"></div>
<div class="a" style="left:49px;top:534.9px;width:7.4px;height:3.6px;background:#f7c98e;border:0.5px solid #e6a45a"></div>
<div class="a" style="left:58.6px;top:534.9px;width:10.2px;height:3.6px;background:#f7c98e;border:0.5px solid #e6a45a"></div>
<div class="a" style="left:71.7px;top:534.9px;width:12.5px;height:3.6px;background:#f7c98e;border:0.5px solid #e6a45a"></div>
<div class="a" style="left:40.3px;top:542px;width:14.6px;height:6px;background:#f7c98e;border:0.5px solid #e6a45a"></div>
<div class="a" style="left:63px;top:542px;width:14.6px;height:6px;background:#f7c98e;border:0.5px solid #e6a45a"></div>
<div class="a" style="left:86.4px;top:540px;width:19.7px;height:8px;background:#f7c98e;border:0.5px solid #e6a45a"></div>
<div class="a" style="left:55.5px;top:542px;width:6px;height:6px;background:#a8d4c8"></div><div class="a" style="left:78.4px;top:542px;width:6.6px;height:6px;background:#a8d4c8"></div>
<div class="a" style="left:107.6px;top:519.5px;width:3.7px;height:28.5px;background:#e8c08a"></div>
<div class="a" style="left:47.8px;top:518.6px;width:0.8px;height:23px;background:#d04070;opacity:.55"></div>
<div class="a" style="left:70px;top:518.6px;width:0.8px;height:23px;background:#d04070;opacity:.55"></div>
<div class="a" style="left:93px;top:518.6px;width:0.8px;height:23px;background:#d04070;opacity:.55"></div>
<div class="a" style="left:100.5px;top:518.6px;width:0.8px;height:23px;background:#d04070;opacity:.55"></div>
<svg style="left:0;top:0" width="20" height="130"><path d="M7.8 114.6 l0.95 2 2.2 0.25 -1.65 1.5 0.45 2.2 -1.95 -1.1 -1.95 1.1 0.45 -2.2 -1.65 -1.5 2.2 -0.25z" fill="#f2f2f2"/></svg>
<div class="a" style="left:144.6px;top:97px;width:7.6px;height:451px;background:#5c5c5c"></div>
<div class="a" style="left:144.8px;top:98px;width:7.2px;height:7px;background:#a4a4a4"></div>
<div class="a" style="left:144.8px;top:106px;width:7.2px;height:224px;background:#a6a6a6"></div>
<div class="a" style="left:144.8px;top:540px;width:7.2px;height:6.5px;background:#a4a4a4"></div>
<svg style="left:0;top:0" width="160" height="560"><path d="M146.6 103 l1.8 -2.2 1.8 2.2z M146.6 542 l1.8 2.2 1.8 -2.2z" fill="#3a3a3a"/></svg>
<div class="a" style="left:1015.6px;top:97px;width:7.4px;height:412px;background:#5e5e5e"></div>
<div class="a" style="left:1015.8px;top:97.7px;width:7px;height:7.3px;background:#a2a2a2"></div>
<div class="a" style="left:1015.8px;top:106px;width:7px;height:36px;background:#a6a6a6"></div>
<div class="a" style="left:1015.8px;top:509.6px;width:7px;height:6.6px;background:#a8a8a8"></div>
<svg style="left:0;top:0" width="1024" height="576"><path d="M1017.6 103 l1.8 -2.2 1.8 2.2z M1017.6 511.8 l1.8 2.2 1.8 -2.2z" fill="#333"/><path d="M1017.8 522.5 l1.6 -1.6 1.6 1.6 M1017.8 524.5 h3.2 M1017.8 531 l1.6 1.6 1.6 -1.6 M1017.8 529 h3.2" stroke="#333" stroke-width="0.9" fill="none"/></svg>
<div class="a" style="left:1001px;top:84px;width:10.6px;height:10.8px;background:#f4f4f4"></div>
<div class="a" style="left:1013px;top:84px;width:11px;height:10.8px;background:#f4f4f4"></div>
<svg style="left:0;top:0" width="1024" height="100"><path d="M1004.6 88 h3.4 l-1.7 2z" fill="#222"/><path d="M1016.2 87 l4.2 4.2 M1020.4 87 l-4.2 4.2" stroke="#222" stroke-width="1.3"/><path d="M1013 77.5 l2.5 -2.4 2.5 2.4" stroke="#333" stroke-width="0.9" fill="none"/><rect x="4" y="85.5" width="8" height="8" fill="#f2f2f2"/><rect x="3.6" y="86.6" width="5.4" height="5.6" fill="#c8462a"/><path d="M5.3 91 v-3 h1.3 a0.9 0.9 0 0 1 0 1.8 h-1.3" stroke="#fff" stroke-width="0.7" fill="none"/><path d="M97.8 87.6 l3.6 3.6 M101.4 87.6 l-3.6 3.6" stroke="#b09a90" stroke-width="0.8"/></svg>
<svg style="left:0;top:0" width="1024" height="576"><rect x="835.6" y="547.5" width="18.8" height="12" fill="#444"/><rect x="840.6" y="550.2" width="8" height="7.6" fill="none" stroke="#f0f0f0" stroke-width="1.1"/><rect x="842.4" y="551.8" width="4.4" height="3" fill="#f0f0f0"/><path d="M860.8 550.3 h3.4 v3 h-3.4z M865.6 550.3 h3.4 v3 h-3.4z M860.8 554.6 h3.4 v3 h-3.4z M865.6 554.6 h3.4 v3 h-3.4z" fill="#eaeaea"/><path d="M881.5 550.6 q1.8 -0.6 3.6 0.4 q1.8 -1 3.6 -0.4 v7 q-1.8 -0.6 -3.6 0.4 q-1.8 -1 -3.6 -0.4z" fill="#9a9a9a"/><path d="M901.8 550.4 h7.2 M902.6 550.4 v3.6 h5.6 v-3.6 M905.4 554 v2.6 M903.6 557 h3.6" stroke="#bdbdbd" stroke-width="1" fill="none"/><path d="M918.2 554.2 h3.6 M923.4 554.2 h53.4" stroke="#c8c8c8" stroke-width="1"/><rect x="950.8" y="550.8" width="2.4" height="6.8" fill="#f2f2f2"/><path d="M979 554.2 h4.4 M981.2 552 v4.4" stroke="#f0f0f0" stroke-width="1.1"/><rect x="1013" y="550.4" width="7.4" height="7.4" fill="none" stroke="#dcdcdc" stroke-width="0.8"/><path d="M1014.2 551.6 l2 2 M1019.2 551.6 l-2 2 M1014.2 556.6 l2 -2 M1019.2 556.6 l-2 -2" stroke="#dcdcdc" stroke-width="0.8"/><path d="M736 552 l2.3 -1.8 2.3 1.8 M735.6 554 h5.4 M735.6 555.6 h5.4 M735.6 557.2 h5.4" stroke="#cfcfcf" stroke-width="0.8" fill="none"/><path d="M778.8 550.4 h6.8 v5 h-3.4 l-1.8 1.8 v-1.8 h-1.6z" fill="#e6e6e6"/><path d="M552 550.6 h-0 " /><rect x="52.4" y="550.6" width="4.4" height="6.6" fill="none" stroke="#d8d8d8" stroke-width="0.8"/><path d="M56.4 556.6 l3 -4 M54.6 557.6 h4.8" stroke="#d8d8d8" stroke-width="0.8"/></svg>
<div class="a" style="left:19px;top:560px;width:138px;height:16px;background:#f2f2f2"></div>
<div class="a" style="left:344px;top:560px;width:82px;height:16px;background:#2c2c2c"></div>
<div class="a" style="left:259px;top:575px;width:81px;height:1px;background:#8fb4d4"></div>
<div class="a" style="left:344px;top:575px;width:82px;height:1px;background:#9cc0e0"></div>
<svg style="left:0;top:0" width="1024" height="576"><path d="M5.2 563.8 l4 -0.5 v3.9 h-4z M9.8 563.2 l4.6 -0.6 v4.6 h-4.6z M5.2 567.8 h4 v3.9 l-4 -0.5z M9.8 567.8 h4.6 v4.6 l-4.6 -0.6z" fill="#fff"/><circle cx="30.8" cy="566.8" r="2.6" fill="none" stroke="#333" stroke-width="1"/><path d="M28.9 568.8 l-2.6 2.6" stroke="#333" stroke-width="1.1"/><path d="M138 563 l1.2 3 3 1.2 -3 1.2 -1.2 3 -1.2 -3 -3 -1.2 3 -1.2z" fill="#f5c518"/><path d="M145.5 566 l0.6 1.5 1.5 0.6 -1.5 0.6 -0.6 1.5 -0.6 -1.5 -1.5 -0.6 1.5 -0.6z" fill="#f5c518"/><path d="M130.8 570 l0.5 1.2 1.2 0.5 -1.2 0.5 -0.5 1.2 -0.5 -1.2 -1.2 -0.5 1.2 -0.5z" fill="#3aa0e8"/><circle cx="143" cy="563.2" r="0.8" fill="#e06090"/><circle cx="151" cy="572" r="0.6" fill="#8ad060"/><circle cx="168" cy="567.8" r="3.3" fill="#d4a040"/><circle cx="168" cy="567.8" r="2" fill="#1a1a1a"/><path d="M166.6 568.8 l1.4 -2 1.4 2z" fill="#d4a040"/><rect x="183" y="563.5" width="8.6" height="8.6" fill="#2a5ea8"/><rect x="188.4" y="564.5" width="3.2" height="6.6" fill="#e8eef8"/><path d="M184.4 565.6 l0.9 4 0.9 -2.4 0.9 2.4 0.9 -4" stroke="#fff" stroke-width="0.6" fill="none"/><circle cx="207.4" cy="567.8" r="4.5" fill="#1e90d8"/><path d="M203 567 a4.5 4.5 0 0 1 8.9 0.4 q0 1.6 -2 1.6 h-3.2 q0.4 1.8 2.6 2 q1 0 2 -0.4 a4.5 4.5 0 0 1 -8.3 -3.6z" fill="#40c8a0"/><path d="M206 569 q0 -2 2 -2 q1.8 0 1.8 1.4z" fill="#1565b0"/><rect x="222.6" y="564.6" width="9.4" height="6.6" rx="1.8" fill="#e81818"/><path d="M226.3 566.2 l2.8 1.7 -2.8 1.7z" fill="#fff"/><circle cx="246.8" cy="567.8" r="4.5" fill="#1877f2"/><path d="M247.8 572.3 v-3.6 h1.2 l0.2 -1.3 h-1.4 v-0.8 q0 -0.6 0.6 -0.6 h0.8 v-1.2 h-1.2 q-1.6 0 -1.6 1.7 v0.9 h-1.1 v1.3 h1.1 v3.6z" fill="#fff"/><circle cx="265.6" cy="567.8" r="4.6" fill="#db4437"/><path d="M265.6 567.8 L261.6 570.1 A4.6 4.6 0 0 0 268 571.7z" fill="#0f9d58"/><path d="M265.6 567.8 L268 571.7 A4.6 4.6 0 0 0 269.6 565.5z" fill="#f4b400"/><circle cx="265.6" cy="567.8" r="2" fill="#fff"/><circle cx="265.6" cy="567.8" r="1.5" fill="#4285f4"/><rect x="347" y="563.4" width="8.4" height="8.8" fill="#c43e1c"/><rect x="351.6" y="564.4" width="4.4" height="6.8" fill="#f0f0f0" opacity="0.9"/><path d="M348.4 570.6 v-5.2 h1.6 a1.4 1.4 0 0 1 0 2.8 h-1.6" stroke="#fff" stroke-width="0.9" fill="none"/><path d="M809.5 569.5 a2.6 2.6 0 0 1 1 -5 a3.4 3.4 0 0 1 6.4 0.6 a2.2 2.2 0 0 1 0.2 4.4z" fill="#a8d0f0"/><path d="M813.6 567 v4.6 M811.8 570 l1.8 1.8 1.8 -1.8" stroke="#2070c0" stroke-width="1" fill="none"/><rect x="880.6" y="565" width="5" height="5.6" rx="1" fill="none" stroke="#ddd" stroke-width="0.8"/><rect x="885.6" y="566.2" width="1.2" height="3" fill="#ddd"/><rect x="894.2" y="563.4" width="9" height="8.6" fill="#e04848"/><path d="M896.5 566.4 l2 1.4 -2 1.4z M899.4 566 h2.4 v3.6 h-2.4z" fill="#fff"/><path d="M906 565.6 h3.4 l1 1 h4.2 v5.2 h-8.6z" fill="#e8c060"/><rect x="910.6" y="563.2" width="3" height="4" fill="#3070d0"/><circle cx="923.2" cy="567.8" r="4.2" fill="#fff"/><path d="M921.6 565.4 l1.6 2.4 1.6 -2.4 M923.2 567.8 v2.6" stroke="#e02020" stroke-width="1.1" fill="none"/><path d="M933.4 564.4 l5 6.4 M934 569 q1.6 -2.4 3.6 -1.4" stroke="#cfcfcf" stroke-width="0.9" fill="none"/><rect x="937.4" y="569.4" width="2.8" height="2.4" fill="#cfcfcf"/><rect x="944.4" y="563.6" width="8.4" height="8.6" fill="#e88a28"/><path d="M946.6 570 l4 -4" stroke="#fff" stroke-width="0.8" opacity="0.8"/><rect x="957.6" y="564.6" width="8" height="5.4" fill="none" stroke="#e0e0e0" stroke-width="0.9"/><path d="M961.6 570 v1.6 M959.4 571.8 h4.4 M956.4 564 v4" stroke="#e0e0e0" stroke-width="0.9"/><path d="M970.4 566.4 h1.6 l2.2 -2 v7 l-2.2 -2 h-1.6z" fill="none" stroke="#e0e0e0" stroke-width="0.8"/><path d="M975.6 566 q1 1.8 0 3.6 M977.2 565 q1.8 2.8 0 5.6" stroke="#e0e0e0" stroke-width="0.7" fill="none"/></svg>
<div class="a" style="left:1022px;top:560px;width:1px;height:16px;background:#777"></div>
<div class="t" style="left:6.10px;top:183.00px;font-size:9.71px;color:#d4d4d4;transform:scaleX(0.8146);transform-origin:left;">2</div>
<div class="t" style="left:6.10px;top:261.00px;font-size:9.71px;color:#d4d4d4;transform:scaleX(0.8146);transform-origin:left;">3</div>
<div class="t" style="left:6.10px;top:339.00px;font-size:9.71px;color:#d4d4d4;transform:scaleX(0.8146);transform-origin:left;">4</div>
<div class="t" style="left:6.10px;top:417.00px;font-size:9.71px;color:#d4d4d4;transform:scaleX(0.8146);transform-origin:left;">5</div>
<div class="t" style="left:6.10px;top:495.00px;font-size:9.71px;color:#d4d4d4;transform:scaleX(0.8146);transform-origin:left;">6</div>
<div class="t" style="left:6.90px;top:105.00px;font-size:10.00px;color:#d8d8d8;transform:scaleX(0.6472);transform-origin:left;">1</div>
<div class="t" style="left:4.20px;top:550.00px;font-size:7.83px;color:#e8e8e8;transform:scaleX(0.7529);transform-origin:left;">Слайд 1 из 11</div>
<div class="t" style="left:70.30px;top:551.00px;font-size:6.67px;color:#e8e8e8;transform:scaleX(0.9949);transform-origin:left;">русский</div>
<div class="t" style="left:744.20px;top:551.00px;font-size:6.96px;color:#e4e4e4;transform:scaleX(0.8832);transform-origin:left;">Заметки</div>
<div class="t" style="left:787.50px;top:551.00px;font-size:6.96px;color:#e4e4e4;transform:scaleX(0.9063);transform-origin:left;">Примечания</div>
<div class="t" style="left:991.80px;top:551.00px;font-size:6.96px;color:#e4e4e4;transform:scaleX(0.8277);transform-origin:left;">113%</div>
<div class="t" style="left:41.00px;top:563.00px;font-size:10.14px;color:#3a3a3a;transform:scaleX(0.8004);transform-origin:left;">Поиск</div>
<div class="t" style="left:272.00px;top:564.00px;font-size:8.12px;color:#f0f0f0;transform:scaleX(0.7968);transform-origin:left;">Mail: Почта, Облако,...</div>
<div class="t" style="left:358.20px;top:564.00px;font-size:8.12px;color:#f0f0f0;transform:scaleX(0.7483);transform-origin:left;">ШАГ_октябрь 2025.p...</div>
<div class="t" style="left:825.00px;top:564.00px;font-size:8.99px;color:#f2f2f2;transform:scaleX(0.7294);transform-origin:left;">6°C</div>
<div class="t" style="left:840.80px;top:564.00px;font-size:8.99px;color:#f2f2f2;transform:scaleX(0.8576);transform-origin:left;">Light rain</div>
<div class="t" style="left:984.80px;top:564.00px;font-size:8.12px;color:#f2f2f2;transform:scaleX(0.6830);transform-origin:left;">РУС</div>
<div class="t" style="left:1005.40px;top:564.00px;font-size:8.12px;color:#f2f2f2;transform:scaleX(0.7027);transform-origin:left;">7:32</div>
</body></html>
